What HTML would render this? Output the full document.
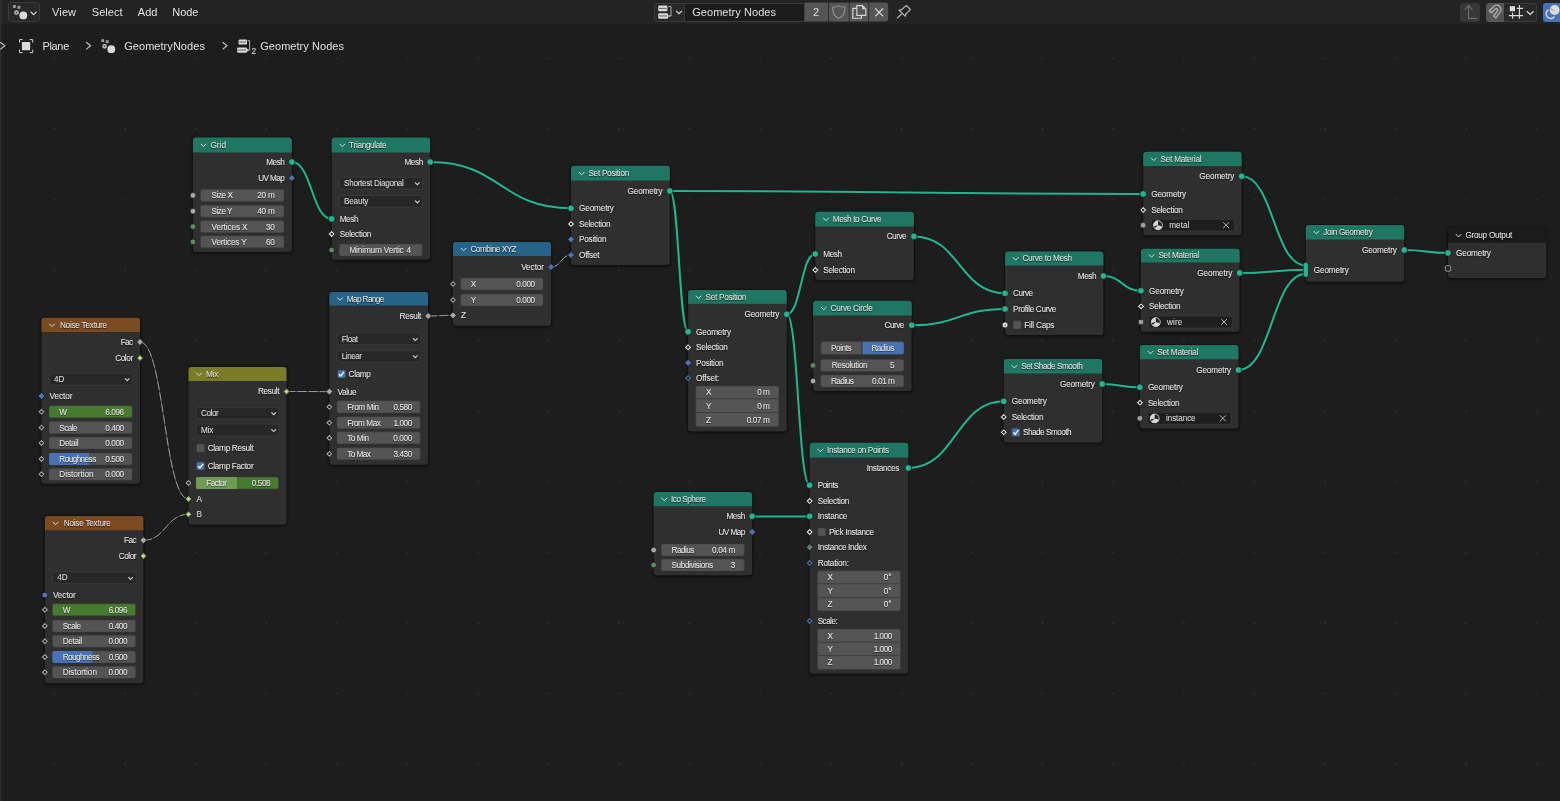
<!DOCTYPE html>
<html><head><meta charset="utf-8"><title>Geometry Nodes</title>
<style>
*{box-sizing:border-box;margin:0;padding:0}
html,body{width:1560px;height:801px;overflow:hidden;background:#1d1d1d}
body{position:relative;font-family:"Liberation Sans",sans-serif;font-size:8.2px;color:#e4e4e4}
svg.layer{position:absolute;left:0;top:0;width:1560px;height:801px;overflow:visible}
#tx,#hx{position:absolute;left:0;top:0;width:1560px;height:801px;will-change:transform}
#hdr{position:absolute;left:0;top:0;width:1560px;height:24px;background:#232323}
#lb{position:absolute;left:0;top:0;width:2px;height:801px;background:linear-gradient(90deg,#2e2e2e 0,#2c2c2c 1px,rgba(44,44,44,0) 2px)}
.t{position:absolute;height:12px;line-height:12px;white-space:nowrap;font-size:8.2px;-webkit-text-stroke:0.08px #e4e4e4;text-shadow:0 0.5px 0.8px rgba(0,0,0,.6)}
.t.hd{font-size:8.2px;color:#e2e2e2;-webkit-text-stroke:0.06px #e6e6e6;text-shadow:0 0.6px 1px rgba(0,0,0,.8)}
.t.fs{font-size:8.2px}
.t.dt{font-size:8.2px;color:#dcdcdc;-webkit-text-stroke:0.06px #dcdcdc;text-shadow:none}
.ht{position:absolute;font-size:11px;line-height:14px;color:#e2e2e2;white-space:nowrap;text-shadow:0 0.4px 0.6px rgba(0,0,0,.35)}
</style></head>
<body>
<svg class="layer" viewBox="0 0 1560 801"><g fill="#292929"><rect x="53.3" y="57.2" width="2.4" height="2.4" rx="1"/><rect x="123.9" y="57.2" width="2.4" height="2.4" rx="1"/><rect x="194.5" y="57.2" width="2.4" height="2.4" rx="1"/><rect x="265.0" y="57.2" width="2.4" height="2.4" rx="1"/><rect x="335.6" y="57.2" width="2.4" height="2.4" rx="1"/><rect x="406.2" y="57.2" width="2.4" height="2.4" rx="1"/><rect x="476.8" y="57.2" width="2.4" height="2.4" rx="1"/><rect x="547.4" y="57.2" width="2.4" height="2.4" rx="1"/><rect x="617.9" y="57.2" width="2.4" height="2.4" rx="1"/><rect x="688.5" y="57.2" width="2.4" height="2.4" rx="1"/><rect x="759.1" y="57.2" width="2.4" height="2.4" rx="1"/><rect x="829.7" y="57.2" width="2.4" height="2.4" rx="1"/><rect x="900.3" y="57.2" width="2.4" height="2.4" rx="1"/><rect x="970.8" y="57.2" width="2.4" height="2.4" rx="1"/><rect x="1041.4" y="57.2" width="2.4" height="2.4" rx="1"/><rect x="1112.0" y="57.2" width="2.4" height="2.4" rx="1"/><rect x="1182.6" y="57.2" width="2.4" height="2.4" rx="1"/><rect x="1253.2" y="57.2" width="2.4" height="2.4" rx="1"/><rect x="1323.7" y="57.2" width="2.4" height="2.4" rx="1"/><rect x="1394.3" y="57.2" width="2.4" height="2.4" rx="1"/><rect x="1464.9" y="57.2" width="2.4" height="2.4" rx="1"/><rect x="1535.5" y="57.2" width="2.4" height="2.4" rx="1"/><rect x="53.3" y="127.8" width="2.4" height="2.4" rx="1"/><rect x="123.9" y="127.8" width="2.4" height="2.4" rx="1"/><rect x="194.5" y="127.8" width="2.4" height="2.4" rx="1"/><rect x="265.0" y="127.8" width="2.4" height="2.4" rx="1"/><rect x="335.6" y="127.8" width="2.4" height="2.4" rx="1"/><rect x="406.2" y="127.8" width="2.4" height="2.4" rx="1"/><rect x="476.8" y="127.8" width="2.4" height="2.4" rx="1"/><rect x="547.4" y="127.8" width="2.4" height="2.4" rx="1"/><rect x="617.9" y="127.8" width="2.4" height="2.4" rx="1"/><rect x="688.5" y="127.8" width="2.4" height="2.4" rx="1"/><rect x="759.1" y="127.8" width="2.4" height="2.4" rx="1"/><rect x="829.7" y="127.8" width="2.4" height="2.4" rx="1"/><rect x="900.3" y="127.8" width="2.4" height="2.4" rx="1"/><rect x="970.8" y="127.8" width="2.4" height="2.4" rx="1"/><rect x="1041.4" y="127.8" width="2.4" height="2.4" rx="1"/><rect x="1112.0" y="127.8" width="2.4" height="2.4" rx="1"/><rect x="1182.6" y="127.8" width="2.4" height="2.4" rx="1"/><rect x="1253.2" y="127.8" width="2.4" height="2.4" rx="1"/><rect x="1323.7" y="127.8" width="2.4" height="2.4" rx="1"/><rect x="1394.3" y="127.8" width="2.4" height="2.4" rx="1"/><rect x="1464.9" y="127.8" width="2.4" height="2.4" rx="1"/><rect x="1535.5" y="127.8" width="2.4" height="2.4" rx="1"/><rect x="53.3" y="198.4" width="2.4" height="2.4" rx="1"/><rect x="123.9" y="198.4" width="2.4" height="2.4" rx="1"/><rect x="194.5" y="198.4" width="2.4" height="2.4" rx="1"/><rect x="265.0" y="198.4" width="2.4" height="2.4" rx="1"/><rect x="335.6" y="198.4" width="2.4" height="2.4" rx="1"/><rect x="406.2" y="198.4" width="2.4" height="2.4" rx="1"/><rect x="476.8" y="198.4" width="2.4" height="2.4" rx="1"/><rect x="547.4" y="198.4" width="2.4" height="2.4" rx="1"/><rect x="617.9" y="198.4" width="2.4" height="2.4" rx="1"/><rect x="688.5" y="198.4" width="2.4" height="2.4" rx="1"/><rect x="759.1" y="198.4" width="2.4" height="2.4" rx="1"/><rect x="829.7" y="198.4" width="2.4" height="2.4" rx="1"/><rect x="900.3" y="198.4" width="2.4" height="2.4" rx="1"/><rect x="970.8" y="198.4" width="2.4" height="2.4" rx="1"/><rect x="1041.4" y="198.4" width="2.4" height="2.4" rx="1"/><rect x="1112.0" y="198.4" width="2.4" height="2.4" rx="1"/><rect x="1182.6" y="198.4" width="2.4" height="2.4" rx="1"/><rect x="1253.2" y="198.4" width="2.4" height="2.4" rx="1"/><rect x="1323.7" y="198.4" width="2.4" height="2.4" rx="1"/><rect x="1394.3" y="198.4" width="2.4" height="2.4" rx="1"/><rect x="1464.9" y="198.4" width="2.4" height="2.4" rx="1"/><rect x="1535.5" y="198.4" width="2.4" height="2.4" rx="1"/><rect x="53.3" y="268.9" width="2.4" height="2.4" rx="1"/><rect x="123.9" y="268.9" width="2.4" height="2.4" rx="1"/><rect x="194.5" y="268.9" width="2.4" height="2.4" rx="1"/><rect x="265.0" y="268.9" width="2.4" height="2.4" rx="1"/><rect x="335.6" y="268.9" width="2.4" height="2.4" rx="1"/><rect x="406.2" y="268.9" width="2.4" height="2.4" rx="1"/><rect x="476.8" y="268.9" width="2.4" height="2.4" rx="1"/><rect x="547.4" y="268.9" width="2.4" height="2.4" rx="1"/><rect x="617.9" y="268.9" width="2.4" height="2.4" rx="1"/><rect x="688.5" y="268.9" width="2.4" height="2.4" rx="1"/><rect x="759.1" y="268.9" width="2.4" height="2.4" rx="1"/><rect x="829.7" y="268.9" width="2.4" height="2.4" rx="1"/><rect x="900.3" y="268.9" width="2.4" height="2.4" rx="1"/><rect x="970.8" y="268.9" width="2.4" height="2.4" rx="1"/><rect x="1041.4" y="268.9" width="2.4" height="2.4" rx="1"/><rect x="1112.0" y="268.9" width="2.4" height="2.4" rx="1"/><rect x="1182.6" y="268.9" width="2.4" height="2.4" rx="1"/><rect x="1253.2" y="268.9" width="2.4" height="2.4" rx="1"/><rect x="1323.7" y="268.9" width="2.4" height="2.4" rx="1"/><rect x="1394.3" y="268.9" width="2.4" height="2.4" rx="1"/><rect x="1464.9" y="268.9" width="2.4" height="2.4" rx="1"/><rect x="1535.5" y="268.9" width="2.4" height="2.4" rx="1"/><rect x="53.3" y="339.5" width="2.4" height="2.4" rx="1"/><rect x="123.9" y="339.5" width="2.4" height="2.4" rx="1"/><rect x="194.5" y="339.5" width="2.4" height="2.4" rx="1"/><rect x="265.0" y="339.5" width="2.4" height="2.4" rx="1"/><rect x="335.6" y="339.5" width="2.4" height="2.4" rx="1"/><rect x="406.2" y="339.5" width="2.4" height="2.4" rx="1"/><rect x="476.8" y="339.5" width="2.4" height="2.4" rx="1"/><rect x="547.4" y="339.5" width="2.4" height="2.4" rx="1"/><rect x="617.9" y="339.5" width="2.4" height="2.4" rx="1"/><rect x="688.5" y="339.5" width="2.4" height="2.4" rx="1"/><rect x="759.1" y="339.5" width="2.4" height="2.4" rx="1"/><rect x="829.7" y="339.5" width="2.4" height="2.4" rx="1"/><rect x="900.3" y="339.5" width="2.4" height="2.4" rx="1"/><rect x="970.8" y="339.5" width="2.4" height="2.4" rx="1"/><rect x="1041.4" y="339.5" width="2.4" height="2.4" rx="1"/><rect x="1112.0" y="339.5" width="2.4" height="2.4" rx="1"/><rect x="1182.6" y="339.5" width="2.4" height="2.4" rx="1"/><rect x="1253.2" y="339.5" width="2.4" height="2.4" rx="1"/><rect x="1323.7" y="339.5" width="2.4" height="2.4" rx="1"/><rect x="1394.3" y="339.5" width="2.4" height="2.4" rx="1"/><rect x="1464.9" y="339.5" width="2.4" height="2.4" rx="1"/><rect x="1535.5" y="339.5" width="2.4" height="2.4" rx="1"/><rect x="53.3" y="410.1" width="2.4" height="2.4" rx="1"/><rect x="123.9" y="410.1" width="2.4" height="2.4" rx="1"/><rect x="194.5" y="410.1" width="2.4" height="2.4" rx="1"/><rect x="265.0" y="410.1" width="2.4" height="2.4" rx="1"/><rect x="335.6" y="410.1" width="2.4" height="2.4" rx="1"/><rect x="406.2" y="410.1" width="2.4" height="2.4" rx="1"/><rect x="476.8" y="410.1" width="2.4" height="2.4" rx="1"/><rect x="547.4" y="410.1" width="2.4" height="2.4" rx="1"/><rect x="617.9" y="410.1" width="2.4" height="2.4" rx="1"/><rect x="688.5" y="410.1" width="2.4" height="2.4" rx="1"/><rect x="759.1" y="410.1" width="2.4" height="2.4" rx="1"/><rect x="829.7" y="410.1" width="2.4" height="2.4" rx="1"/><rect x="900.3" y="410.1" width="2.4" height="2.4" rx="1"/><rect x="970.8" y="410.1" width="2.4" height="2.4" rx="1"/><rect x="1041.4" y="410.1" width="2.4" height="2.4" rx="1"/><rect x="1112.0" y="410.1" width="2.4" height="2.4" rx="1"/><rect x="1182.6" y="410.1" width="2.4" height="2.4" rx="1"/><rect x="1253.2" y="410.1" width="2.4" height="2.4" rx="1"/><rect x="1323.7" y="410.1" width="2.4" height="2.4" rx="1"/><rect x="1394.3" y="410.1" width="2.4" height="2.4" rx="1"/><rect x="1464.9" y="410.1" width="2.4" height="2.4" rx="1"/><rect x="1535.5" y="410.1" width="2.4" height="2.4" rx="1"/><rect x="53.3" y="480.7" width="2.4" height="2.4" rx="1"/><rect x="123.9" y="480.7" width="2.4" height="2.4" rx="1"/><rect x="194.5" y="480.7" width="2.4" height="2.4" rx="1"/><rect x="265.0" y="480.7" width="2.4" height="2.4" rx="1"/><rect x="335.6" y="480.7" width="2.4" height="2.4" rx="1"/><rect x="406.2" y="480.7" width="2.4" height="2.4" rx="1"/><rect x="476.8" y="480.7" width="2.4" height="2.4" rx="1"/><rect x="547.4" y="480.7" width="2.4" height="2.4" rx="1"/><rect x="617.9" y="480.7" width="2.4" height="2.4" rx="1"/><rect x="688.5" y="480.7" width="2.4" height="2.4" rx="1"/><rect x="759.1" y="480.7" width="2.4" height="2.4" rx="1"/><rect x="829.7" y="480.7" width="2.4" height="2.4" rx="1"/><rect x="900.3" y="480.7" width="2.4" height="2.4" rx="1"/><rect x="970.8" y="480.7" width="2.4" height="2.4" rx="1"/><rect x="1041.4" y="480.7" width="2.4" height="2.4" rx="1"/><rect x="1112.0" y="480.7" width="2.4" height="2.4" rx="1"/><rect x="1182.6" y="480.7" width="2.4" height="2.4" rx="1"/><rect x="1253.2" y="480.7" width="2.4" height="2.4" rx="1"/><rect x="1323.7" y="480.7" width="2.4" height="2.4" rx="1"/><rect x="1394.3" y="480.7" width="2.4" height="2.4" rx="1"/><rect x="1464.9" y="480.7" width="2.4" height="2.4" rx="1"/><rect x="1535.5" y="480.7" width="2.4" height="2.4" rx="1"/><rect x="53.3" y="551.3" width="2.4" height="2.4" rx="1"/><rect x="123.9" y="551.3" width="2.4" height="2.4" rx="1"/><rect x="194.5" y="551.3" width="2.4" height="2.4" rx="1"/><rect x="265.0" y="551.3" width="2.4" height="2.4" rx="1"/><rect x="335.6" y="551.3" width="2.4" height="2.4" rx="1"/><rect x="406.2" y="551.3" width="2.4" height="2.4" rx="1"/><rect x="476.8" y="551.3" width="2.4" height="2.4" rx="1"/><rect x="547.4" y="551.3" width="2.4" height="2.4" rx="1"/><rect x="617.9" y="551.3" width="2.4" height="2.4" rx="1"/><rect x="688.5" y="551.3" width="2.4" height="2.4" rx="1"/><rect x="759.1" y="551.3" width="2.4" height="2.4" rx="1"/><rect x="829.7" y="551.3" width="2.4" height="2.4" rx="1"/><rect x="900.3" y="551.3" width="2.4" height="2.4" rx="1"/><rect x="970.8" y="551.3" width="2.4" height="2.4" rx="1"/><rect x="1041.4" y="551.3" width="2.4" height="2.4" rx="1"/><rect x="1112.0" y="551.3" width="2.4" height="2.4" rx="1"/><rect x="1182.6" y="551.3" width="2.4" height="2.4" rx="1"/><rect x="1253.2" y="551.3" width="2.4" height="2.4" rx="1"/><rect x="1323.7" y="551.3" width="2.4" height="2.4" rx="1"/><rect x="1394.3" y="551.3" width="2.4" height="2.4" rx="1"/><rect x="1464.9" y="551.3" width="2.4" height="2.4" rx="1"/><rect x="1535.5" y="551.3" width="2.4" height="2.4" rx="1"/><rect x="53.3" y="621.8" width="2.4" height="2.4" rx="1"/><rect x="123.9" y="621.8" width="2.4" height="2.4" rx="1"/><rect x="194.5" y="621.8" width="2.4" height="2.4" rx="1"/><rect x="265.0" y="621.8" width="2.4" height="2.4" rx="1"/><rect x="335.6" y="621.8" width="2.4" height="2.4" rx="1"/><rect x="406.2" y="621.8" width="2.4" height="2.4" rx="1"/><rect x="476.8" y="621.8" width="2.4" height="2.4" rx="1"/><rect x="547.4" y="621.8" width="2.4" height="2.4" rx="1"/><rect x="617.9" y="621.8" width="2.4" height="2.4" rx="1"/><rect x="688.5" y="621.8" width="2.4" height="2.4" rx="1"/><rect x="759.1" y="621.8" width="2.4" height="2.4" rx="1"/><rect x="829.7" y="621.8" width="2.4" height="2.4" rx="1"/><rect x="900.3" y="621.8" width="2.4" height="2.4" rx="1"/><rect x="970.8" y="621.8" width="2.4" height="2.4" rx="1"/><rect x="1041.4" y="621.8" width="2.4" height="2.4" rx="1"/><rect x="1112.0" y="621.8" width="2.4" height="2.4" rx="1"/><rect x="1182.6" y="621.8" width="2.4" height="2.4" rx="1"/><rect x="1253.2" y="621.8" width="2.4" height="2.4" rx="1"/><rect x="1323.7" y="621.8" width="2.4" height="2.4" rx="1"/><rect x="1394.3" y="621.8" width="2.4" height="2.4" rx="1"/><rect x="1464.9" y="621.8" width="2.4" height="2.4" rx="1"/><rect x="1535.5" y="621.8" width="2.4" height="2.4" rx="1"/><rect x="53.3" y="692.4" width="2.4" height="2.4" rx="1"/><rect x="123.9" y="692.4" width="2.4" height="2.4" rx="1"/><rect x="194.5" y="692.4" width="2.4" height="2.4" rx="1"/><rect x="265.0" y="692.4" width="2.4" height="2.4" rx="1"/><rect x="335.6" y="692.4" width="2.4" height="2.4" rx="1"/><rect x="406.2" y="692.4" width="2.4" height="2.4" rx="1"/><rect x="476.8" y="692.4" width="2.4" height="2.4" rx="1"/><rect x="547.4" y="692.4" width="2.4" height="2.4" rx="1"/><rect x="617.9" y="692.4" width="2.4" height="2.4" rx="1"/><rect x="688.5" y="692.4" width="2.4" height="2.4" rx="1"/><rect x="759.1" y="692.4" width="2.4" height="2.4" rx="1"/><rect x="829.7" y="692.4" width="2.4" height="2.4" rx="1"/><rect x="900.3" y="692.4" width="2.4" height="2.4" rx="1"/><rect x="970.8" y="692.4" width="2.4" height="2.4" rx="1"/><rect x="1041.4" y="692.4" width="2.4" height="2.4" rx="1"/><rect x="1112.0" y="692.4" width="2.4" height="2.4" rx="1"/><rect x="1182.6" y="692.4" width="2.4" height="2.4" rx="1"/><rect x="1253.2" y="692.4" width="2.4" height="2.4" rx="1"/><rect x="1323.7" y="692.4" width="2.4" height="2.4" rx="1"/><rect x="1394.3" y="692.4" width="2.4" height="2.4" rx="1"/><rect x="1464.9" y="692.4" width="2.4" height="2.4" rx="1"/><rect x="1535.5" y="692.4" width="2.4" height="2.4" rx="1"/><rect x="53.3" y="763.0" width="2.4" height="2.4" rx="1"/><rect x="123.9" y="763.0" width="2.4" height="2.4" rx="1"/><rect x="194.5" y="763.0" width="2.4" height="2.4" rx="1"/><rect x="265.0" y="763.0" width="2.4" height="2.4" rx="1"/><rect x="335.6" y="763.0" width="2.4" height="2.4" rx="1"/><rect x="406.2" y="763.0" width="2.4" height="2.4" rx="1"/><rect x="476.8" y="763.0" width="2.4" height="2.4" rx="1"/><rect x="547.4" y="763.0" width="2.4" height="2.4" rx="1"/><rect x="617.9" y="763.0" width="2.4" height="2.4" rx="1"/><rect x="688.5" y="763.0" width="2.4" height="2.4" rx="1"/><rect x="759.1" y="763.0" width="2.4" height="2.4" rx="1"/><rect x="829.7" y="763.0" width="2.4" height="2.4" rx="1"/><rect x="900.3" y="763.0" width="2.4" height="2.4" rx="1"/><rect x="970.8" y="763.0" width="2.4" height="2.4" rx="1"/><rect x="1041.4" y="763.0" width="2.4" height="2.4" rx="1"/><rect x="1112.0" y="763.0" width="2.4" height="2.4" rx="1"/><rect x="1182.6" y="763.0" width="2.4" height="2.4" rx="1"/><rect x="1253.2" y="763.0" width="2.4" height="2.4" rx="1"/><rect x="1323.7" y="763.0" width="2.4" height="2.4" rx="1"/><rect x="1394.3" y="763.0" width="2.4" height="2.4" rx="1"/><rect x="1464.9" y="763.0" width="2.4" height="2.4" rx="1"/><rect x="1535.5" y="763.0" width="2.4" height="2.4" rx="1"/></g></svg>
<svg class="layer" viewBox="0 0 1560 801"><defs><filter id="sh" x="-20%" y="-20%" width="140%" height="140%"><feGaussianBlur stdDeviation="1.6"/></filter></defs><path d="M291.8 162.0C311.8 162.0 311.8 218.9 331.7 218.9" stroke="#08211b" stroke-width="3.5" fill="none" opacity="0.85"/><path d="M291.8 162.0C311.8 162.0 311.8 218.9 331.7 218.9" stroke="#2ab18d" stroke-width="2.05" fill="none"/><path d="M430.1 162.0C500.6 162.0 500.6 208.3 571.0 208.3" stroke="#08211b" stroke-width="3.5" fill="none" opacity="0.85"/><path d="M430.1 162.0C500.6 162.0 500.6 208.3 571.0 208.3" stroke="#2ab18d" stroke-width="2.05" fill="none"/><path d="M669.8 191.0C906.5 191.0 906.5 194.0 1143.2 194.0" stroke="#08211b" stroke-width="3.5" fill="none" opacity="0.85"/><path d="M669.8 191.0C906.5 191.0 906.5 194.0 1143.2 194.0" stroke="#2ab18d" stroke-width="2.05" fill="none"/><path d="M669.8 191.0C679.0 191.0 679.0 331.7 688.1 331.7" stroke="#08211b" stroke-width="3.5" fill="none" opacity="0.85"/><path d="M669.8 191.0C679.0 191.0 679.0 331.7 688.1 331.7" stroke="#2ab18d" stroke-width="2.05" fill="none"/><path d="M786.7 314.2C801.0 314.2 801.0 254.0 815.3 254.0" stroke="#08211b" stroke-width="3.5" fill="none" opacity="0.85"/><path d="M786.7 314.2C801.0 314.2 801.0 254.0 815.3 254.0" stroke="#2ab18d" stroke-width="2.05" fill="none"/><path d="M786.7 314.2C798.2 314.2 798.2 485.2 809.7 485.2" stroke="#08211b" stroke-width="3.5" fill="none" opacity="0.85"/><path d="M786.7 314.2C798.2 314.2 798.2 485.2 809.7 485.2" stroke="#2ab18d" stroke-width="2.05" fill="none"/><path d="M913.9 236.4C959.5 236.4 959.5 293.3 1005.1 293.3" stroke="#08211b" stroke-width="3.5" fill="none" opacity="0.85"/><path d="M913.9 236.4C959.5 236.4 959.5 293.3 1005.1 293.3" stroke="#2ab18d" stroke-width="2.05" fill="none"/><path d="M911.7 325.2C958.4 325.2 958.4 309.0 1005.1 309.0" stroke="#08211b" stroke-width="3.5" fill="none" opacity="0.85"/><path d="M911.7 325.2C958.4 325.2 958.4 309.0 1005.1 309.0" stroke="#2ab18d" stroke-width="2.05" fill="none"/><path d="M1103.4 276.0C1122.2 276.0 1122.2 290.8 1141.0 290.8" stroke="#08211b" stroke-width="3.5" fill="none" opacity="0.85"/><path d="M1103.4 276.0C1122.2 276.0 1122.2 290.8 1141.0 290.8" stroke="#2ab18d" stroke-width="2.05" fill="none"/><path d="M752.1 516.4C780.9 516.4 780.9 516.4 809.7 516.4" stroke="#08211b" stroke-width="3.5" fill="none" opacity="0.85"/><path d="M752.1 516.4C780.9 516.4 780.9 516.4 809.7 516.4" stroke="#2ab18d" stroke-width="2.05" fill="none"/><path d="M908.3 468.0C956.0 468.0 956.0 401.3 1003.8 401.3" stroke="#08211b" stroke-width="3.5" fill="none" opacity="0.85"/><path d="M908.3 468.0C956.0 468.0 956.0 401.3 1003.8 401.3" stroke="#2ab18d" stroke-width="2.05" fill="none"/><path d="M1102.2 384.0C1121.1 384.0 1121.1 387.3 1139.9 387.3" stroke="#08211b" stroke-width="3.5" fill="none" opacity="0.85"/><path d="M1102.2 384.0C1121.1 384.0 1121.1 387.3 1139.9 387.3" stroke="#2ab18d" stroke-width="2.05" fill="none"/><path d="M1241.6 176.3C1273.7 176.3 1273.7 265.4 1305.8 265.4" stroke="#08211b" stroke-width="3.5" fill="none" opacity="0.85"/><path d="M1241.6 176.3C1273.7 176.3 1273.7 265.4 1305.8 265.4" stroke="#2ab18d" stroke-width="2.05" fill="none"/><path d="M1239.6 273.0C1272.7 273.0 1272.7 269.8 1305.8 269.8" stroke="#08211b" stroke-width="3.5" fill="none" opacity="0.85"/><path d="M1239.6 273.0C1272.7 273.0 1272.7 269.8 1305.8 269.8" stroke="#2ab18d" stroke-width="2.05" fill="none"/><path d="M1238.4 370.0C1272.1 370.0 1272.1 273.8 1305.8 273.8" stroke="#08211b" stroke-width="3.5" fill="none" opacity="0.85"/><path d="M1238.4 370.0C1272.1 370.0 1272.1 273.8 1305.8 273.8" stroke="#2ab18d" stroke-width="2.05" fill="none"/><path d="M1404.2 250.0C1426.1 250.0 1426.1 253.0 1448.0 253.0" stroke="#08211b" stroke-width="3.5" fill="none" opacity="0.85"/><path d="M1404.2 250.0C1426.1 250.0 1426.1 253.0 1448.0 253.0" stroke="#2ab18d" stroke-width="2.05" fill="none"/><path d="M551.0 267.0C561.0 267.0 561.0 255.0 571.0 255.0" stroke="#141414" stroke-width="2.4" fill="none" opacity="0.45"/><path d="M551.0 267.0C561.0 267.0 561.0 255.0 571.0 255.0" stroke="#6a6e6c" stroke-width="0.9" fill="none" opacity="0.8"/><path d="M551.0 267.0C561.0 267.0 561.0 255.0 571.0 255.0" stroke="#b4bab8" stroke-width="0.85" fill="none" stroke-dasharray="8.5 2.8" opacity="0.85"/><path d="M428.1 316.0C440.6 316.0 440.6 315.3 453.0 315.3" stroke="#141414" stroke-width="2.4" fill="none" opacity="0.45"/><path d="M428.1 316.0C440.6 316.0 440.6 315.3 453.0 315.3" stroke="#6a6e6c" stroke-width="0.9" fill="none" opacity="0.8"/><path d="M428.1 316.0C440.6 316.0 440.6 315.3 453.0 315.3" stroke="#b4bab8" stroke-width="0.85" fill="none" stroke-dasharray="8.5 2.8" opacity="0.85"/><path d="M286.5 391.5C307.9 391.5 307.9 391.6 329.3 391.6" stroke="#141414" stroke-width="2.4" fill="none" opacity="0.45"/><path d="M286.5 391.5C307.9 391.5 307.9 391.6 329.3 391.6" stroke="#6a6e6c" stroke-width="0.9" fill="none" opacity="0.8"/><path d="M286.5 391.5C307.9 391.5 307.9 391.6 329.3 391.6" stroke="#b4bab8" stroke-width="0.85" fill="none" stroke-dasharray="8.5 2.8" opacity="0.85"/><path d="M140.0 342.0C164.2 342.0 164.2 499.0 188.5 499.0" stroke="#141414" stroke-width="2.4" fill="none" opacity="0.45"/><path d="M140.0 342.0C164.2 342.0 164.2 499.0 188.5 499.0" stroke="#6a6e6c" stroke-width="0.9" fill="none" opacity="0.8"/><path d="M140.0 342.0C164.2 342.0 164.2 499.0 188.5 499.0" stroke="#b4bab8" stroke-width="0.85" fill="none" stroke-dasharray="8.5 2.8" opacity="0.85"/><path d="M143.4 540.3C165.9 540.3 165.9 514.3 188.5 514.3" stroke="#141414" stroke-width="2.4" fill="none" opacity="0.45"/><path d="M143.4 540.3C165.9 540.3 165.9 514.3 188.5 514.3" stroke="#6a6e6c" stroke-width="0.9" fill="none" opacity="0.8"/><path d="M143.4 540.3C165.9 540.3 165.9 514.3 188.5 514.3" stroke="#b4bab8" stroke-width="0.85" fill="none" stroke-dasharray="8.5 2.8" opacity="0.85"/><rect x="192.50" y="138.00" width="99.80" height="115.70" rx="3.5" fill="#000" opacity="0.55" filter="url(#sh)"/><rect x="192.30" y="136.80" width="100.20" height="115.90" rx="3.6" fill="#121212"/><path d="M196.00 137.50H288.80Q291.80 137.50 291.80 140.50V249.00Q291.80 252.00 288.80 252.00H196.00Q193.00 252.00 193.00 249.00V140.50Q193.00 137.50 196.00 137.50Z" fill="#2f2f2f"/><path d="M196.00 137.50H288.80Q291.80 137.50 291.80 140.50V152.50Q291.80 152.50 291.80 152.50H193.00Q193.00 152.50 193.00 152.50V140.50Q193.00 137.50 196.00 137.50Z" fill="#1f7763"/><path d="M200.80 143.80L203.60 146.60L206.40 143.80" fill="none" stroke="#dddddd" stroke-width="1.0"/><path d="M202.50 189.35H282.00Q284.00 189.35 284.00 191.35V199.45Q284.00 201.45 282.00 201.45H202.50Q200.50 201.45 200.50 199.45V191.35Q200.50 189.35 202.50 189.35Z" fill="#545454" stroke="#3a3a3a" stroke-width="0.5"/><path d="M202.50 205.15H282.00Q284.00 205.15 284.00 207.15V215.25Q284.00 217.25 282.00 217.25H202.50Q200.50 217.25 200.50 215.25V207.15Q200.50 205.15 202.50 205.15Z" fill="#545454" stroke="#3a3a3a" stroke-width="0.5"/><path d="M202.50 220.55H282.00Q284.00 220.55 284.00 222.55V230.65Q284.00 232.65 282.00 232.65H202.50Q200.50 232.65 200.50 230.65V222.55Q200.50 220.55 202.50 220.55Z" fill="#545454" stroke="#3a3a3a" stroke-width="0.5"/><path d="M202.50 235.75H282.00Q284.00 235.75 284.00 237.75V245.85Q284.00 247.85 282.00 247.85H202.50Q200.50 247.85 200.50 245.85V237.75Q200.50 235.75 202.50 235.75Z" fill="#545454" stroke="#3a3a3a" stroke-width="0.5"/><rect x="331.20" y="138.00" width="99.40" height="123.40" rx="3.5" fill="#000" opacity="0.55" filter="url(#sh)"/><rect x="331.00" y="136.80" width="99.80" height="123.60" rx="3.6" fill="#121212"/><path d="M334.70 137.50H427.10Q430.10 137.50 430.10 140.50V256.70Q430.10 259.70 427.10 259.70H334.70Q331.70 259.70 331.70 256.70V140.50Q331.70 137.50 334.70 137.50Z" fill="#2f2f2f"/><path d="M334.70 137.50H427.10Q430.10 137.50 430.10 140.50V152.50Q430.10 152.50 430.10 152.50H331.70Q331.70 152.50 331.70 152.50V140.50Q331.70 137.50 334.70 137.50Z" fill="#1f7763"/><path d="M339.50 143.80L342.30 146.60L345.10 143.80" fill="none" stroke="#dddddd" stroke-width="1.0"/><path d="M341.30 177.20H420.70Q422.70 177.20 422.70 179.20V187.00Q422.70 189.00 420.70 189.00H341.30Q339.30 189.00 339.30 187.00V179.20Q339.30 177.20 341.30 177.20Z" fill="#272727" stroke="#404040" stroke-width="0.7"/><path d="M415.00 182.35L417.30 184.65L419.60 182.35" fill="none" stroke="#d0d0d0" stroke-width="1.1"/><path d="M341.30 195.50H420.70Q422.70 195.50 422.70 197.50V205.30Q422.70 207.30 420.70 207.30H341.30Q339.30 207.30 339.30 205.30V197.50Q339.30 195.50 341.30 195.50Z" fill="#272727" stroke="#404040" stroke-width="0.7"/><path d="M415.00 200.65L417.30 202.95L419.60 200.65" fill="none" stroke="#d0d0d0" stroke-width="1.1"/><path d="M341.20 243.95H420.30Q422.30 243.95 422.30 245.95V254.05Q422.30 256.05 420.30 256.05H341.20Q339.20 256.05 339.20 254.05V245.95Q339.20 243.95 341.20 243.95Z" fill="#545454" stroke="#3a3a3a" stroke-width="0.5"/><rect x="570.50" y="166.30" width="99.80" height="100.40" rx="3.5" fill="#000" opacity="0.55" filter="url(#sh)"/><rect x="570.30" y="165.10" width="100.20" height="100.60" rx="3.6" fill="#121212"/><path d="M574.00 165.80H666.80Q669.80 165.80 669.80 168.80V262.00Q669.80 265.00 666.80 265.00H574.00Q571.00 265.00 571.00 262.00V168.80Q571.00 165.80 574.00 165.80Z" fill="#2f2f2f"/><path d="M574.00 165.80H666.80Q669.80 165.80 669.80 168.80V180.60Q669.80 180.60 669.80 180.60H571.00Q571.00 180.60 571.00 180.60V168.80Q571.00 165.80 574.00 165.80Z" fill="#1f7763"/><path d="M578.80 172.00L581.60 174.80L584.40 172.00" fill="none" stroke="#dddddd" stroke-width="1.0"/><rect x="452.50" y="242.60" width="99.00" height="84.90" rx="3.5" fill="#000" opacity="0.55" filter="url(#sh)"/><rect x="452.30" y="241.40" width="99.40" height="85.10" rx="3.6" fill="#121212"/><path d="M456.00 242.10H548.00Q551.00 242.10 551.00 245.10V322.80Q551.00 325.80 548.00 325.80H456.00Q453.00 325.80 453.00 322.80V245.10Q453.00 242.10 456.00 242.10Z" fill="#2f2f2f"/><path d="M456.00 242.10H548.00Q551.00 242.10 551.00 245.10V256.10Q551.00 256.10 551.00 256.10H453.00Q453.00 256.10 453.00 256.10V245.10Q453.00 242.10 456.00 242.10Z" fill="#256487"/><path d="M460.80 247.90L463.60 250.70L466.40 247.90" fill="none" stroke="#dddddd" stroke-width="1.0"/><path d="M462.50 277.95H541.20Q543.20 277.95 543.20 279.95V288.05Q543.20 290.05 541.20 290.05H462.50Q460.50 290.05 460.50 288.05V279.95Q460.50 277.95 462.50 277.95Z" fill="#545454" stroke="#3a3a3a" stroke-width="0.5"/><path d="M462.50 293.95H541.20Q543.20 293.95 543.20 295.95V304.05Q543.20 306.05 541.20 306.05H462.50Q460.50 306.05 460.50 304.05V295.95Q460.50 293.95 462.50 293.95Z" fill="#545454" stroke="#3a3a3a" stroke-width="0.5"/><rect x="328.90" y="292.50" width="99.70" height="174.00" rx="3.5" fill="#000" opacity="0.55" filter="url(#sh)"/><rect x="328.70" y="291.30" width="100.10" height="174.20" rx="3.6" fill="#121212"/><path d="M332.40 292.00H425.10Q428.10 292.00 428.10 295.00V461.80Q428.10 464.80 425.10 464.80H332.40Q329.40 464.80 329.40 461.80V295.00Q329.40 292.00 332.40 292.00Z" fill="#2f2f2f"/><path d="M332.40 292.00H425.10Q428.10 292.00 428.10 295.00V305.40Q428.10 305.40 428.10 305.40H329.40Q329.40 305.40 329.40 305.40V295.00Q329.40 292.00 332.40 292.00Z" fill="#256487"/><path d="M337.20 297.50L340.00 300.30L342.80 297.50" fill="none" stroke="#dddddd" stroke-width="1.0"/><path d="M339.00 333.10H418.70Q420.70 333.10 420.70 335.10V342.90Q420.70 344.90 418.70 344.90H339.00Q337.00 344.90 337.00 342.90V335.10Q337.00 333.10 339.00 333.10Z" fill="#272727" stroke="#404040" stroke-width="0.7"/><path d="M413.00 338.25L415.30 340.55L417.60 338.25" fill="none" stroke="#d0d0d0" stroke-width="1.1"/><path d="M339.00 350.30H418.70Q420.70 350.30 420.70 352.30V360.10Q420.70 362.10 418.70 362.10H339.00Q337.00 362.10 337.00 360.10V352.30Q337.00 350.30 339.00 350.30Z" fill="#272727" stroke="#404040" stroke-width="0.7"/><path d="M413.00 355.45L415.30 357.75L417.60 355.45" fill="none" stroke="#d0d0d0" stroke-width="1.1"/><rect x="337.40" y="369.90" width="8.20" height="8.20" rx="1.6" fill="#4772b3" stroke="#3a3a3a" stroke-width="0.5"/><path d="M339.00 374.20L340.80 376.00L344.00 371.80" fill="none" stroke="#fff" stroke-width="1.3"/><path d="M338.90 400.85H418.30Q420.30 400.85 420.30 402.85V410.95Q420.30 412.95 418.30 412.95H338.90Q336.90 412.95 336.90 410.95V402.85Q336.90 400.85 338.90 400.85Z" fill="#545454" stroke="#3a3a3a" stroke-width="0.5"/><path d="M338.90 416.65H418.30Q420.30 416.65 420.30 418.65V426.75Q420.30 428.75 418.30 428.75H338.90Q336.90 428.75 336.90 426.75V418.65Q336.90 416.65 338.90 416.65Z" fill="#545454" stroke="#3a3a3a" stroke-width="0.5"/><path d="M338.90 431.85H418.30Q420.30 431.85 420.30 433.85V441.95Q420.30 443.95 418.30 443.95H338.90Q336.90 443.95 336.90 441.95V433.85Q336.90 431.85 338.90 431.85Z" fill="#545454" stroke="#3a3a3a" stroke-width="0.5"/><path d="M338.90 447.75H418.30Q420.30 447.75 420.30 449.75V457.85Q420.30 459.85 418.30 459.85H338.90Q336.90 459.85 336.90 457.85V449.75Q336.90 447.75 338.90 447.75Z" fill="#545454" stroke="#3a3a3a" stroke-width="0.5"/><rect x="41.00" y="318.30" width="99.50" height="167.20" rx="3.5" fill="#000" opacity="0.55" filter="url(#sh)"/><rect x="40.80" y="317.10" width="99.90" height="167.40" rx="3.6" fill="#121212"/><path d="M44.50 317.80H137.00Q140.00 317.80 140.00 320.80V480.80Q140.00 483.80 137.00 483.80H44.50Q41.50 483.80 41.50 480.80V320.80Q41.50 317.80 44.50 317.80Z" fill="#2f2f2f"/><path d="M44.50 317.80H137.00Q140.00 317.80 140.00 320.80V332.10Q140.00 332.10 140.00 332.10H41.50Q41.50 332.10 41.50 332.10V320.80Q41.50 317.80 44.50 317.80Z" fill="#7a4a20"/><path d="M49.30 323.75L52.10 326.55L54.90 323.75" fill="none" stroke="#dddddd" stroke-width="1.0"/><path d="M51.10 373.30H130.60Q132.60 373.30 132.60 375.30V383.10Q132.60 385.10 130.60 385.10H51.10Q49.10 385.10 49.10 383.10V375.30Q49.10 373.30 51.10 373.30Z" fill="#272727" stroke="#404040" stroke-width="0.7"/><path d="M124.90 378.45L127.20 380.75L129.50 378.45" fill="none" stroke="#d0d0d0" stroke-width="1.1"/><path d="M51.00 405.65H130.20Q132.20 405.65 132.20 407.65V415.75Q132.20 417.75 130.20 417.75H51.00Q49.00 417.75 49.00 415.75V407.65Q49.00 405.65 51.00 405.65Z" fill="#467a2e" stroke="#3a3a3a" stroke-width="0.5"/><path d="M51.00 421.55H130.20Q132.20 421.55 132.20 423.55V431.65Q132.20 433.65 130.20 433.65H51.00Q49.00 433.65 49.00 431.65V423.55Q49.00 421.55 51.00 421.55Z" fill="#545454" stroke="#3a3a3a" stroke-width="0.5"/><path d="M51.00 436.95H130.20Q132.20 436.95 132.20 438.95V447.05Q132.20 449.05 130.20 449.05H51.00Q49.00 449.05 49.00 447.05V438.95Q49.00 436.95 51.00 436.95Z" fill="#545454" stroke="#3a3a3a" stroke-width="0.5"/><path d="M51.00 452.95H130.20Q132.20 452.95 132.20 454.95V463.05Q132.20 465.05 130.20 465.05H51.00Q49.00 465.05 49.00 463.05V454.95Q49.00 452.95 51.00 452.95Z" fill="#545454" stroke="#3a3a3a" stroke-width="0.5"/><path d="M51.00 452.95H88.94Q88.94 452.95 88.94 452.95V465.05Q88.94 465.05 88.94 465.05H51.00Q49.00 465.05 49.00 463.05V454.95Q49.00 452.95 51.00 452.95Z" fill="#4772b3"/><path d="M51.00 468.15H130.20Q132.20 468.15 132.20 470.15V478.25Q132.20 480.25 130.20 480.25H51.00Q49.00 480.25 49.00 478.25V470.15Q49.00 468.15 51.00 468.15Z" fill="#545454" stroke="#3a3a3a" stroke-width="0.5"/><rect x="44.40" y="516.50" width="99.50" height="168.40" rx="3.5" fill="#000" opacity="0.55" filter="url(#sh)"/><rect x="44.20" y="515.30" width="99.90" height="168.60" rx="3.6" fill="#121212"/><path d="M47.90 516.00H140.40Q143.40 516.00 143.40 519.00V680.20Q143.40 683.20 140.40 683.20H47.90Q44.90 683.20 44.90 680.20V519.00Q44.90 516.00 47.90 516.00Z" fill="#2f2f2f"/><path d="M47.90 516.00H140.40Q143.40 516.00 143.40 519.00V530.20Q143.40 530.20 143.40 530.20H44.90Q44.90 530.20 44.90 530.20V519.00Q44.90 516.00 47.90 516.00Z" fill="#7a4a20"/><path d="M52.70 521.90L55.50 524.70L58.30 521.90" fill="none" stroke="#dddddd" stroke-width="1.0"/><path d="M54.50 571.90H134.00Q136.00 571.90 136.00 573.90V581.70Q136.00 583.70 134.00 583.70H54.50Q52.50 583.70 52.50 581.70V573.90Q52.50 571.90 54.50 571.90Z" fill="#272727" stroke="#404040" stroke-width="0.7"/><path d="M128.30 577.05L130.60 579.35L132.90 577.05" fill="none" stroke="#d0d0d0" stroke-width="1.1"/><path d="M54.40 603.75H133.60Q135.60 603.75 135.60 605.75V613.85Q135.60 615.85 133.60 615.85H54.40Q52.40 615.85 52.40 613.85V605.75Q52.40 603.75 54.40 603.75Z" fill="#467a2e" stroke="#3a3a3a" stroke-width="0.5"/><path d="M54.40 619.95H133.60Q135.60 619.95 135.60 621.95V630.05Q135.60 632.05 133.60 632.05H54.40Q52.40 632.05 52.40 630.05V621.95Q52.40 619.95 54.40 619.95Z" fill="#545454" stroke="#3a3a3a" stroke-width="0.5"/><path d="M54.40 635.15H133.60Q135.60 635.15 135.60 637.15V645.25Q135.60 647.25 133.60 647.25H54.40Q52.40 647.25 52.40 645.25V637.15Q52.40 635.15 54.40 635.15Z" fill="#545454" stroke="#3a3a3a" stroke-width="0.5"/><path d="M54.40 650.95H133.60Q135.60 650.95 135.60 652.95V661.05Q135.60 663.05 133.60 663.05H54.40Q52.40 663.05 52.40 661.05V652.95Q52.40 650.95 54.40 650.95Z" fill="#545454" stroke="#3a3a3a" stroke-width="0.5"/><path d="M54.40 650.95H92.34Q92.34 650.95 92.34 650.95V663.05Q92.34 663.05 92.34 663.05H54.40Q52.40 663.05 52.40 661.05V652.95Q52.40 650.95 54.40 650.95Z" fill="#4772b3"/><path d="M54.40 666.15H133.60Q135.60 666.15 135.60 668.15V676.25Q135.60 678.25 133.60 678.25H54.40Q52.40 678.25 52.40 676.25V668.15Q52.40 666.15 54.40 666.15Z" fill="#545454" stroke="#3a3a3a" stroke-width="0.5"/><rect x="188.00" y="367.50" width="99.00" height="158.60" rx="3.5" fill="#000" opacity="0.55" filter="url(#sh)"/><rect x="187.80" y="366.30" width="99.40" height="158.80" rx="3.6" fill="#121212"/><path d="M191.50 367.00H283.50Q286.50 367.00 286.50 370.00V521.40Q286.50 524.40 283.50 524.40H191.50Q188.50 524.40 188.50 521.40V370.00Q188.50 367.00 191.50 367.00Z" fill="#2f2f2f"/><path d="M191.50 367.00H283.50Q286.50 367.00 286.50 370.00V380.90Q286.50 380.90 286.50 380.90H188.50Q188.50 380.90 188.50 380.90V370.00Q188.50 367.00 191.50 367.00Z" fill="#7a7b26"/><path d="M196.30 372.75L199.10 375.55L201.90 372.75" fill="none" stroke="#dddddd" stroke-width="1.0"/><path d="M198.10 407.30H277.10Q279.10 407.30 279.10 409.30V417.10Q279.10 419.10 277.10 419.10H198.10Q196.10 419.10 196.10 417.10V409.30Q196.10 407.30 198.10 407.30Z" fill="#272727" stroke="#404040" stroke-width="0.7"/><path d="M271.40 412.45L273.70 414.75L276.00 412.45" fill="none" stroke="#d0d0d0" stroke-width="1.1"/><path d="M198.10 424.10H277.10Q279.10 424.10 279.10 426.10V433.90Q279.10 435.90 277.10 435.90H198.10Q196.10 435.90 196.10 433.90V426.10Q196.10 424.10 198.10 424.10Z" fill="#272727" stroke="#404040" stroke-width="0.7"/><path d="M271.40 429.25L273.70 431.55L276.00 429.25" fill="none" stroke="#d0d0d0" stroke-width="1.1"/><rect x="196.50" y="443.90" width="8.20" height="8.20" rx="1.6" fill="#545454" stroke="#3a3a3a" stroke-width="0.5"/><rect x="196.50" y="461.90" width="8.20" height="8.20" rx="1.6" fill="#4772b3" stroke="#3a3a3a" stroke-width="0.5"/><path d="M198.10 466.20L199.90 468.00L203.10 463.80" fill="none" stroke="#fff" stroke-width="1.3"/><path d="M198.00 476.95H276.70Q278.70 476.95 278.70 478.95V487.05Q278.70 489.05 276.70 489.05H198.00Q196.00 489.05 196.00 487.05V478.95Q196.00 476.95 198.00 476.95Z" fill="#467a2e" stroke="#3a3a3a" stroke-width="0.5"/><path d="M198.00 476.95H236.94Q236.94 476.95 236.94 476.95V489.05Q236.94 489.05 236.94 489.05H198.00Q196.00 489.05 196.00 487.05V478.95Q196.00 476.95 198.00 476.95Z" fill="#6d9b52"/><rect x="687.60" y="290.50" width="99.60" height="142.40" rx="3.5" fill="#000" opacity="0.55" filter="url(#sh)"/><rect x="687.40" y="289.30" width="100.00" height="142.60" rx="3.6" fill="#121212"/><path d="M691.10 290.00H783.70Q786.70 290.00 786.70 293.00V428.20Q786.70 431.20 783.70 431.20H691.10Q688.10 431.20 688.10 428.20V293.00Q688.10 290.00 691.10 290.00Z" fill="#2f2f2f"/><path d="M691.10 290.00H783.70Q786.70 290.00 786.70 293.00V303.70Q786.70 303.70 786.70 303.70H688.10Q688.10 303.70 688.10 303.70V293.00Q688.10 290.00 691.10 290.00Z" fill="#1f7763"/><path d="M695.90 295.65L698.70 298.45L701.50 295.65" fill="none" stroke="#dddddd" stroke-width="1.0"/><path d="M697.80 386.00H776.90Q778.90 386.00 778.90 388.00V424.70Q778.90 426.70 776.90 426.70H697.80Q695.80 426.70 695.80 424.70V388.00Q695.80 386.00 697.80 386.00Z" fill="#545454" stroke="#3a3a3a" stroke-width="0.5"/><rect x="695.80" y="398.35" width="83.10" height="0.9" fill="#3b3b3b"/><rect x="695.80" y="412.05" width="83.10" height="0.9" fill="#3b3b3b"/><rect x="814.80" y="212.20" width="99.60" height="69.50" rx="3.5" fill="#000" opacity="0.55" filter="url(#sh)"/><rect x="814.60" y="211.00" width="100.00" height="69.70" rx="3.6" fill="#121212"/><path d="M818.30 211.70H910.90Q913.90 211.70 913.90 214.70V277.00Q913.90 280.00 910.90 280.00H818.30Q815.30 280.00 815.30 277.00V214.70Q815.30 211.70 818.30 211.70Z" fill="#2f2f2f"/><path d="M818.30 211.70H910.90Q913.90 211.70 913.90 214.70V226.40Q913.90 226.40 913.90 226.40H815.30Q815.30 226.40 815.30 226.40V214.70Q815.30 211.70 818.30 211.70Z" fill="#1f7763"/><path d="M823.10 217.85L825.90 220.65L828.70 217.85" fill="none" stroke="#dddddd" stroke-width="1.0"/><rect x="812.60" y="301.30" width="99.60" height="91.30" rx="3.5" fill="#000" opacity="0.55" filter="url(#sh)"/><rect x="812.40" y="300.10" width="100.00" height="91.50" rx="3.6" fill="#121212"/><path d="M816.10 300.80H908.70Q911.70 300.80 911.70 303.80V387.90Q911.70 390.90 908.70 390.90H816.10Q813.10 390.90 813.10 387.90V303.80Q813.10 300.80 816.10 300.80Z" fill="#2f2f2f"/><path d="M816.10 300.80H908.70Q911.70 300.80 911.70 303.80V315.40Q911.70 315.40 911.70 315.40H813.10Q813.10 315.40 813.10 315.40V303.80Q813.10 300.80 816.10 300.80Z" fill="#1f7763"/><path d="M820.90 306.90L823.70 309.70L826.50 306.90" fill="none" stroke="#dddddd" stroke-width="1.0"/><path d="M822.80 341.60H861.80Q861.80 341.60 861.80 341.60V354.40Q861.80 354.40 861.80 354.40H822.80Q820.80 354.40 820.80 352.40V343.60Q820.80 341.60 822.80 341.60Z" fill="#545454" stroke="#3a3a3a" stroke-width="0.5"/><path d="M862.30 341.60H902.00Q904.00 341.60 904.00 343.60V352.40Q904.00 354.40 902.00 354.40H862.30Q862.30 354.40 862.30 354.40V341.60Q862.30 341.60 862.30 341.60Z" fill="#4772b3" stroke="#3a3a3a" stroke-width="0.5"/><path d="M822.60 359.35H901.90Q903.90 359.35 903.90 361.35V369.45Q903.90 371.45 901.90 371.45H822.60Q820.60 371.45 820.60 369.45V361.35Q820.60 359.35 822.60 359.35Z" fill="#545454" stroke="#3a3a3a" stroke-width="0.5"/><path d="M822.60 374.95H901.90Q903.90 374.95 903.90 376.95V385.05Q903.90 387.05 901.90 387.05H822.60Q820.60 387.05 820.60 385.05V376.95Q820.60 374.95 822.60 374.95Z" fill="#545454" stroke="#3a3a3a" stroke-width="0.5"/><rect x="1004.60" y="251.90" width="99.30" height="84.80" rx="3.5" fill="#000" opacity="0.55" filter="url(#sh)"/><rect x="1004.40" y="250.70" width="99.70" height="85.00" rx="3.6" fill="#121212"/><path d="M1008.10 251.40H1100.40Q1103.40 251.40 1103.40 254.40V332.00Q1103.40 335.00 1100.40 335.00H1008.10Q1005.10 335.00 1005.10 332.00V254.40Q1005.10 251.40 1008.10 251.40Z" fill="#2f2f2f"/><path d="M1008.10 251.40H1100.40Q1103.40 251.40 1103.40 254.40V265.50Q1103.40 265.50 1103.40 265.50H1005.10Q1005.10 265.50 1005.10 265.50V254.40Q1005.10 251.40 1008.10 251.40Z" fill="#1f7763"/><path d="M1012.90 257.25L1015.70 260.05L1018.50 257.25" fill="none" stroke="#dddddd" stroke-width="1.0"/><rect x="1013.10" y="320.80" width="8.20" height="8.20" rx="1.6" fill="#545454" stroke="#3a3a3a" stroke-width="0.5"/><rect x="1003.30" y="359.60" width="99.40" height="84.50" rx="3.5" fill="#000" opacity="0.55" filter="url(#sh)"/><rect x="1003.10" y="358.40" width="99.80" height="84.70" rx="3.6" fill="#121212"/><path d="M1006.80 359.10H1099.20Q1102.20 359.10 1102.20 362.10V439.40Q1102.20 442.40 1099.20 442.40H1006.80Q1003.80 442.40 1003.80 439.40V362.10Q1003.80 359.10 1006.80 359.10Z" fill="#2f2f2f"/><path d="M1006.80 359.10H1099.20Q1102.20 359.10 1102.20 362.10V373.60Q1102.20 373.60 1102.20 373.60H1003.80Q1003.80 373.60 1003.80 373.60V362.10Q1003.80 359.10 1006.80 359.10Z" fill="#1f7763"/><path d="M1011.60 365.15L1014.40 367.95L1017.20 365.15" fill="none" stroke="#dddddd" stroke-width="1.0"/><rect x="1011.80" y="428.20" width="8.20" height="8.20" rx="1.6" fill="#4772b3" stroke="#3a3a3a" stroke-width="0.5"/><path d="M1013.40 432.50L1015.20 434.30L1018.40 430.10" fill="none" stroke="#fff" stroke-width="1.3"/><rect x="1142.70" y="152.30" width="99.40" height="84.60" rx="3.5" fill="#000" opacity="0.55" filter="url(#sh)"/><rect x="1142.50" y="151.10" width="99.80" height="84.80" rx="3.6" fill="#121212"/><path d="M1146.20 151.80H1238.60Q1241.60 151.80 1241.60 154.80V232.20Q1241.60 235.20 1238.60 235.20H1146.20Q1143.20 235.20 1143.20 232.20V154.80Q1143.20 151.80 1146.20 151.80Z" fill="#2f2f2f"/><path d="M1146.20 151.80H1238.60Q1241.60 151.80 1241.60 154.80V166.10Q1241.60 166.10 1241.60 166.10H1143.20Q1143.20 166.10 1143.20 166.10V154.80Q1143.20 151.80 1146.20 151.80Z" fill="#1f7763"/><path d="M1151.00 157.75L1153.80 160.55L1156.60 157.75" fill="none" stroke="#dddddd" stroke-width="1.0"/><path d="M1153.00 219.25H1232.30Q1234.30 219.25 1234.30 221.25V229.15Q1234.30 231.15 1232.30 231.15H1153.00Q1151.00 231.15 1151.00 229.15V221.25Q1151.00 219.25 1153.00 219.25Z" fill="#1e1e1e" stroke="#3c3c3c" stroke-width="0.7"/><circle cx="1158.00" cy="225.30" r="4.7" fill="#d6d6d6"/><path d="M1158.00 225.30L1158.00 220.60A4.7 4.7 0 0 1 1162.47 226.75Z" fill="#242424"/><path d="M1158.00 225.30L1154.51 228.44A4.7 4.7 0 0 1 1153.40 226.28Z" fill="#242424"/><circle cx="1158.00" cy="225.30" r="4.4" fill="none" stroke="#d6d6d6" stroke-width="0.7"/><path d="M1223.20 222.30L1229.00 228.10M1229.00 222.30L1223.20 228.10" fill="none" stroke="#bebebe" stroke-width="0.95"/><rect x="1140.50" y="249.20" width="99.60" height="84.20" rx="3.5" fill="#000" opacity="0.55" filter="url(#sh)"/><rect x="1140.30" y="248.00" width="100.00" height="84.40" rx="3.6" fill="#121212"/><path d="M1144.00 248.70H1236.60Q1239.60 248.70 1239.60 251.70V328.70Q1239.60 331.70 1236.60 331.70H1144.00Q1141.00 331.70 1141.00 328.70V251.70Q1141.00 248.70 1144.00 248.70Z" fill="#2f2f2f"/><path d="M1144.00 248.70H1236.60Q1239.60 248.70 1239.60 251.70V262.40Q1239.60 262.40 1239.60 262.40H1141.00Q1141.00 262.40 1141.00 262.40V251.70Q1141.00 248.70 1144.00 248.70Z" fill="#1f7763"/><path d="M1148.80 254.35L1151.60 257.15L1154.40 254.35" fill="none" stroke="#dddddd" stroke-width="1.0"/><path d="M1150.80 316.05H1230.30Q1232.30 316.05 1232.30 318.05V325.95Q1232.30 327.95 1230.30 327.95H1150.80Q1148.80 327.95 1148.80 325.95V318.05Q1148.80 316.05 1150.80 316.05Z" fill="#1e1e1e" stroke="#3c3c3c" stroke-width="0.7"/><circle cx="1155.80" cy="322.10" r="4.7" fill="#d6d6d6"/><path d="M1155.80 322.10L1155.80 317.40A4.7 4.7 0 0 1 1160.27 323.55Z" fill="#242424"/><path d="M1155.80 322.10L1152.31 325.24A4.7 4.7 0 0 1 1151.20 323.08Z" fill="#242424"/><circle cx="1155.80" cy="322.10" r="4.4" fill="none" stroke="#d6d6d6" stroke-width="0.7"/><path d="M1221.20 319.10L1227.00 324.90M1227.00 319.10L1221.20 324.90" fill="none" stroke="#bebebe" stroke-width="0.95"/><rect x="1139.40" y="345.60" width="99.50" height="84.50" rx="3.5" fill="#000" opacity="0.55" filter="url(#sh)"/><rect x="1139.20" y="344.40" width="99.90" height="84.70" rx="3.6" fill="#121212"/><path d="M1142.90 345.10H1235.40Q1238.40 345.10 1238.40 348.10V425.40Q1238.40 428.40 1235.40 428.40H1142.90Q1139.90 428.40 1139.90 425.40V348.10Q1139.90 345.10 1142.90 345.10Z" fill="#2f2f2f"/><path d="M1142.90 345.10H1235.40Q1238.40 345.10 1238.40 348.10V359.20Q1238.40 359.20 1238.40 359.20H1139.90Q1139.90 359.20 1139.90 359.20V348.10Q1139.90 345.10 1142.90 345.10Z" fill="#1f7763"/><path d="M1147.70 350.95L1150.50 353.75L1153.30 350.95" fill="none" stroke="#dddddd" stroke-width="1.0"/><path d="M1149.70 412.35H1229.10Q1231.10 412.35 1231.10 414.35V422.25Q1231.10 424.25 1229.10 424.25H1149.70Q1147.70 424.25 1147.70 422.25V414.35Q1147.70 412.35 1149.70 412.35Z" fill="#1e1e1e" stroke="#3c3c3c" stroke-width="0.7"/><circle cx="1154.70" cy="418.40" r="4.7" fill="#d6d6d6"/><path d="M1154.70 418.40L1154.70 413.70A4.7 4.7 0 0 1 1159.17 419.85Z" fill="#242424"/><path d="M1154.70 418.40L1151.21 421.54A4.7 4.7 0 0 1 1150.10 419.38Z" fill="#242424"/><circle cx="1154.70" cy="418.40" r="4.4" fill="none" stroke="#d6d6d6" stroke-width="0.7"/><path d="M1220.00 415.40L1225.80 421.20M1225.80 415.40L1220.00 421.20" fill="none" stroke="#bebebe" stroke-width="0.95"/><rect x="1305.30" y="225.50" width="99.40" height="58.00" rx="3.5" fill="#000" opacity="0.55" filter="url(#sh)"/><rect x="1305.10" y="224.30" width="99.80" height="58.20" rx="3.6" fill="#121212"/><path d="M1308.80 225.00H1401.20Q1404.20 225.00 1404.20 228.00V278.80Q1404.20 281.80 1401.20 281.80H1308.80Q1305.80 281.80 1305.80 278.80V228.00Q1305.80 225.00 1308.80 225.00Z" fill="#2f2f2f"/><path d="M1308.80 225.00H1401.20Q1404.20 225.00 1404.20 228.00V239.40Q1404.20 239.40 1404.20 239.40H1305.80Q1305.80 239.40 1305.80 239.40V228.00Q1305.80 225.00 1308.80 225.00Z" fill="#1f7763"/><path d="M1313.60 231.00L1316.40 233.80L1319.20 231.00" fill="none" stroke="#dddddd" stroke-width="1.0"/><rect x="1447.50" y="228.20" width="99.30" height="51.50" rx="3.5" fill="#000" opacity="0.55" filter="url(#sh)"/><rect x="1447.30" y="227.00" width="99.70" height="51.70" rx="3.6" fill="#121212"/><path d="M1451.00 227.70H1543.30Q1546.30 227.70 1546.30 230.70V275.00Q1546.30 278.00 1543.30 278.00H1451.00Q1448.00 278.00 1448.00 275.00V230.70Q1448.00 227.70 1451.00 227.70Z" fill="#2f2f2f"/><path d="M1451.00 227.70H1543.30Q1546.30 227.70 1546.30 230.70V243.00Q1546.30 243.00 1546.30 243.00H1448.00Q1448.00 243.00 1448.00 243.00V230.70Q1448.00 227.70 1451.00 227.70Z" fill="#1b1b1b"/><path d="M1455.80 234.15L1458.60 236.95L1461.40 234.15" fill="none" stroke="#dddddd" stroke-width="1.0"/><rect x="809.20" y="443.30" width="99.60" height="231.80" rx="3.5" fill="#000" opacity="0.55" filter="url(#sh)"/><rect x="809.00" y="442.10" width="100.00" height="232.00" rx="3.6" fill="#121212"/><path d="M812.70 442.80H905.30Q908.30 442.80 908.30 445.80V670.40Q908.30 673.40 905.30 673.40H812.70Q809.70 673.40 809.70 670.40V445.80Q809.70 442.80 812.70 442.80Z" fill="#2f2f2f"/><path d="M812.70 442.80H905.30Q908.30 442.80 908.30 445.80V457.40Q908.30 457.40 908.30 457.40H809.70Q809.70 457.40 809.70 457.40V445.80Q809.70 442.80 812.70 442.80Z" fill="#1f7763"/><path d="M817.50 448.90L820.30 451.70L823.10 448.90" fill="none" stroke="#dddddd" stroke-width="1.0"/><rect x="817.70" y="527.90" width="8.20" height="8.20" rx="1.6" fill="#545454" stroke="#3a3a3a" stroke-width="0.5"/><path d="M819.40 570.80H898.50Q900.50 570.80 900.50 572.80V608.90Q900.50 610.90 898.50 610.90H819.40Q817.40 610.90 817.40 608.90V572.80Q817.40 570.80 819.40 570.80Z" fill="#545454" stroke="#3a3a3a" stroke-width="0.5"/><rect x="817.40" y="583.35" width="83.10" height="0.9" fill="#3b3b3b"/><rect x="817.40" y="596.95" width="83.10" height="0.9" fill="#3b3b3b"/><path d="M819.40 629.10H898.50Q900.50 629.10 900.50 631.10V667.40Q900.50 669.40 898.50 669.40H819.40Q817.40 669.40 817.40 667.40V631.10Q817.40 629.10 819.40 629.10Z" fill="#545454" stroke="#3a3a3a" stroke-width="0.5"/><rect x="817.40" y="641.65" width="83.10" height="0.9" fill="#3b3b3b"/><rect x="817.40" y="655.15" width="83.10" height="0.9" fill="#3b3b3b"/><rect x="653.20" y="492.50" width="99.40" height="84.40" rx="3.5" fill="#000" opacity="0.55" filter="url(#sh)"/><rect x="653.00" y="491.30" width="99.80" height="84.60" rx="3.6" fill="#121212"/><path d="M656.70 492.00H749.10Q752.10 492.00 752.10 495.00V572.20Q752.10 575.20 749.10 575.20H656.70Q653.70 575.20 653.70 572.20V495.00Q653.70 492.00 656.70 492.00Z" fill="#2f2f2f"/><path d="M656.70 492.00H749.10Q752.10 492.00 752.10 495.00V506.20Q752.10 506.20 752.10 506.20H653.70Q653.70 506.20 653.70 506.20V495.00Q653.70 492.00 656.70 492.00Z" fill="#1f7763"/><path d="M661.50 497.90L664.30 500.70L667.10 497.90" fill="none" stroke="#dddddd" stroke-width="1.0"/><path d="M663.20 543.95H742.30Q744.30 543.95 744.30 545.95V554.05Q744.30 556.05 742.30 556.05H663.20Q661.20 556.05 661.20 554.05V545.95Q661.20 543.95 663.20 543.95Z" fill="#545454" stroke="#3a3a3a" stroke-width="0.5"/><path d="M663.20 558.95H742.30Q744.30 558.95 744.30 560.95V569.05Q744.30 571.05 742.30 571.05H663.20Q661.20 571.05 661.20 569.05V560.95Q661.20 558.95 663.20 558.95Z" fill="#545454" stroke="#3a3a3a" stroke-width="0.5"/></svg>
<div id="tx"><div class="t hd" style="left:210.40px;top:139.80px;letter-spacing:0.036px;">Grid</div><div class="t" style="right:1275.52px;top:156.90px;letter-spacing:-0.417px;">Mesh</div><div class="t" style="right:1275.66px;top:172.90px;letter-spacing:-0.564px;">UV Map</div><div class="t fs" style="left:211.60px;top:190.30px;letter-spacing:-0.460px;">Size X</div><div class="t fs" style="right:1285.51px;top:190.30px;letter-spacing:-0.210px;">20 m</div><div class="t fs" style="left:211.60px;top:206.10px;letter-spacing:-0.530px;">Size Y</div><div class="t fs" style="right:1285.51px;top:206.10px;letter-spacing:-0.210px;">40 m</div><div class="t fs" style="left:211.60px;top:221.50px;letter-spacing:-0.102px;">Vertices X</div><div class="t fs" style="right:1285.62px;top:221.50px;letter-spacing:-0.321px;">30</div><div class="t fs" style="left:211.60px;top:236.70px;letter-spacing:-0.185px;">Vertices Y</div><div class="t fs" style="right:1285.72px;top:236.70px;letter-spacing:-0.421px;">60</div><div class="t hd" style="left:349.10px;top:139.80px;letter-spacing:-0.312px;">Triangulate</div><div class="t" style="right:1137.22px;top:156.90px;letter-spacing:-0.417px;">Mesh</div><div class="t dt" style="left:344.10px;top:177.70px;letter-spacing:-0.330px;">Shortest Diagonal</div><div class="t dt" style="left:344.10px;top:196.00px;letter-spacing:-0.246px;">Beauty</div><div class="t" style="left:339.70px;top:213.80px;letter-spacing:-0.417px;">Mesh</div><div class="t" style="left:339.70px;top:228.90px;letter-spacing:-0.254px;">Selection</div><div class="t fs" style="left:349.40px;top:244.90px;letter-spacing:-0.127px;">Minimum Vertic</div><div class="t fs" style="right:1149.00px;top:244.90px;">4</div><div class="t hd" style="left:588.40px;top:168.00px;letter-spacing:-0.260px;">Set Position</div><div class="t" style="right:897.64px;top:185.90px;letter-spacing:-0.143px;">Geometry</div><div class="t" style="left:579.00px;top:203.20px;letter-spacing:-0.143px;">Geometry</div><div class="t" style="left:579.00px;top:218.90px;letter-spacing:-0.254px;">Selection</div><div class="t" style="left:579.00px;top:234.20px;letter-spacing:-0.239px;">Position</div><div class="t" style="left:579.00px;top:249.90px;letter-spacing:-0.225px;">Offset</div><div class="t hd" style="left:470.40px;top:243.90px;letter-spacing:-0.474px;">Combine XYZ</div><div class="t" style="right:1015.95px;top:261.90px;letter-spacing:-0.050px;">Vector</div><div class="t fs" style="left:470.80px;top:278.90px;">X</div><div class="t fs" style="right:1025.28px;top:278.90px;letter-spacing:-0.380px;">0.000</div><div class="t fs" style="left:470.80px;top:294.90px;">Y</div><div class="t fs" style="right:1025.28px;top:294.90px;letter-spacing:-0.380px;">0.000</div><div class="t" style="left:461.00px;top:310.20px;">Z</div><div class="t hd" style="left:346.80px;top:293.50px;letter-spacing:-0.600px;">Map Range</div><div class="t" style="right:1139.11px;top:310.90px;letter-spacing:-0.309px;">Result</div><div class="t dt" style="left:341.80px;top:333.60px;letter-spacing:-0.483px;">Float</div><div class="t dt" style="left:341.80px;top:350.80px;letter-spacing:-0.499px;">Linear</div><div class="t" style="left:348.60px;top:368.90px;letter-spacing:-0.349px;">Clamp</div><div class="t" style="left:337.40px;top:386.50px;letter-spacing:-0.266px;">Value</div><div class="t fs" style="left:347.20px;top:401.80px;letter-spacing:-0.375px;">From Min</div><div class="t fs" style="right:1148.23px;top:401.80px;letter-spacing:-0.430px;">0.580</div><div class="t fs" style="left:347.20px;top:417.60px;letter-spacing:-0.457px;">From Max</div><div class="t fs" style="right:1148.23px;top:417.60px;letter-spacing:-0.430px;">1.000</div><div class="t fs" style="left:347.20px;top:432.80px;letter-spacing:-0.430px;">To Min</div><div class="t fs" style="right:1148.18px;top:432.80px;letter-spacing:-0.380px;">0.000</div><div class="t fs" style="left:347.20px;top:448.70px;letter-spacing:-0.546px;">To Max</div><div class="t fs" style="right:1148.23px;top:448.70px;letter-spacing:-0.430px;">3.430</div><div class="t hd" style="left:59.90px;top:319.75px;letter-spacing:-0.224px;">Noise Texture</div><div class="t" style="right:1427.50px;top:336.90px;letter-spacing:-0.600px;">Fac</div><div class="t" style="right:1427.32px;top:352.90px;letter-spacing:-0.424px;">Color</div><div class="t dt" style="left:53.90px;top:373.80px;">4D</div><div class="t" style="left:49.50px;top:390.90px;letter-spacing:-0.050px;">Vector</div><div class="t fs" style="left:59.30px;top:406.60px;">W</div><div class="t fs" style="right:1436.33px;top:406.60px;letter-spacing:-0.430px;">6.096</div><div class="t fs" style="left:59.30px;top:422.50px;letter-spacing:-0.553px;">Scale</div><div class="t fs" style="right:1436.33px;top:422.50px;letter-spacing:-0.430px;">0.400</div><div class="t fs" style="left:59.30px;top:437.90px;letter-spacing:-0.333px;">Detail</div><div class="t fs" style="right:1436.28px;top:437.90px;letter-spacing:-0.380px;">0.000</div><div class="t fs" style="left:59.30px;top:453.90px;letter-spacing:-0.561px;">Roughness</div><div class="t fs" style="right:1436.33px;top:453.90px;letter-spacing:-0.430px;">0.500</div><div class="t fs" style="left:59.30px;top:469.10px;letter-spacing:-0.037px;">Distortion</div><div class="t fs" style="right:1436.28px;top:469.10px;letter-spacing:-0.380px;">0.000</div><div class="t hd" style="left:63.70px;top:517.90px;letter-spacing:-0.224px;">Noise Texture</div><div class="t" style="right:1424.10px;top:535.20px;letter-spacing:-0.600px;">Fac</div><div class="t" style="right:1423.92px;top:550.90px;letter-spacing:-0.424px;">Color</div><div class="t dt" style="left:57.30px;top:572.40px;">4D</div><div class="t" style="left:52.90px;top:589.90px;letter-spacing:-0.050px;">Vector</div><div class="t fs" style="left:62.70px;top:604.70px;">W</div><div class="t fs" style="right:1432.93px;top:604.70px;letter-spacing:-0.430px;">6.096</div><div class="t fs" style="left:62.70px;top:620.90px;letter-spacing:-0.553px;">Scale</div><div class="t fs" style="right:1432.93px;top:620.90px;letter-spacing:-0.430px;">0.400</div><div class="t fs" style="left:62.70px;top:636.10px;letter-spacing:-0.333px;">Detail</div><div class="t fs" style="right:1432.88px;top:636.10px;letter-spacing:-0.380px;">0.000</div><div class="t fs" style="left:62.70px;top:651.90px;letter-spacing:-0.561px;">Roughness</div><div class="t fs" style="right:1432.93px;top:651.90px;letter-spacing:-0.430px;">0.500</div><div class="t fs" style="left:62.70px;top:667.10px;letter-spacing:-0.037px;">Distortion</div><div class="t fs" style="right:1432.88px;top:667.10px;letter-spacing:-0.380px;">0.000</div><div class="t hd" style="left:205.90px;top:368.75px;letter-spacing:-0.176px;">Mix</div><div class="t" style="right:1280.71px;top:386.40px;letter-spacing:-0.309px;">Result</div><div class="t dt" style="left:200.90px;top:407.80px;letter-spacing:-0.424px;">Color</div><div class="t dt" style="left:200.90px;top:424.60px;letter-spacing:-0.176px;">Mix</div><div class="t" style="left:207.70px;top:442.90px;letter-spacing:-0.292px;">Clamp Result</div><div class="t" style="left:207.70px;top:460.90px;letter-spacing:-0.292px;">Clamp Factor</div><div class="t fs" style="left:206.30px;top:477.90px;letter-spacing:-0.528px;">Factor</div><div class="t fs" style="right:1289.83px;top:477.90px;letter-spacing:-0.430px;">0.508</div><div class="t" style="left:196.50px;top:493.90px;">A</div><div class="t" style="left:196.50px;top:509.20px;">B</div><div class="t hd" style="left:705.50px;top:291.65px;letter-spacing:-0.260px;">Set Position</div><div class="t" style="right:780.74px;top:309.20px;letter-spacing:-0.143px;">Geometry</div><div class="t" style="left:696.10px;top:326.60px;letter-spacing:-0.143px;">Geometry</div><div class="t" style="left:696.10px;top:342.20px;letter-spacing:-0.254px;">Selection</div><div class="t" style="left:696.10px;top:357.70px;letter-spacing:-0.239px;">Position</div><div class="t" style="left:696.10px;top:372.90px;letter-spacing:-0.117px;">Offset:</div><div class="t fs" style="left:706.00px;top:387.30px;">X</div><div class="t fs" style="right:790.58px;top:387.30px;letter-spacing:-0.485px;">0 m</div><div class="t fs" style="left:706.00px;top:400.55px;">Y</div><div class="t fs" style="right:790.58px;top:400.55px;letter-spacing:-0.485px;">0 m</div><div class="t fs" style="left:706.00px;top:414.50px;">Z</div><div class="t fs" style="right:790.45px;top:414.50px;letter-spacing:-0.354px;">0.07 m</div><div class="t hd" style="left:832.70px;top:213.85px;letter-spacing:-0.360px;">Mesh to Curve</div><div class="t" style="right:653.87px;top:231.30px;letter-spacing:-0.469px;">Curve</div><div class="t" style="left:823.30px;top:248.90px;letter-spacing:-0.417px;">Mesh</div><div class="t" style="left:823.30px;top:264.90px;letter-spacing:-0.254px;">Selection</div><div class="t hd" style="left:830.50px;top:302.90px;letter-spacing:-0.255px;">Curve Circle</div><div class="t" style="right:656.07px;top:320.10px;letter-spacing:-0.469px;">Curve</div><div class="t fs" style="left:791.09px;width:100px;text-align:center;top:342.90px;letter-spacing:-0.418px;">Points</div><div class="t fs" style="left:832.65px;width:100px;text-align:center;top:342.90px;letter-spacing:-0.505px;">Radius</div><div class="t fs" style="left:831.70px;top:360.30px;letter-spacing:-0.305px;">Resolution</div><div class="t fs" style="right:665.40px;top:360.30px;">5</div><div class="t fs" style="left:830.90px;top:375.90px;letter-spacing:-0.505px;">Radius</div><div class="t fs" style="right:665.53px;top:375.90px;letter-spacing:-0.434px;">0.01 m</div><div class="t hd" style="left:1022.50px;top:253.25px;letter-spacing:-0.302px;">Curve to Mesh</div><div class="t" style="right:463.92px;top:270.90px;letter-spacing:-0.417px;">Mesh</div><div class="t" style="left:1013.10px;top:288.20px;letter-spacing:-0.469px;">Curve</div><div class="t" style="left:1013.10px;top:303.90px;letter-spacing:-0.341px;">Profile Curve</div><div class="t" style="left:1024.30px;top:319.80px;letter-spacing:-0.212px;">Fill Caps</div><div class="t hd" style="left:1021.20px;top:361.15px;letter-spacing:-0.476px;">Set Shade Smooth</div><div class="t" style="right:465.24px;top:378.90px;letter-spacing:-0.143px;">Geometry</div><div class="t" style="left:1011.80px;top:396.20px;letter-spacing:-0.143px;">Geometry</div><div class="t" style="left:1011.80px;top:411.90px;letter-spacing:-0.254px;">Selection</div><div class="t" style="left:1023.00px;top:427.20px;letter-spacing:-0.505px;">Shade Smooth</div><div class="t hd" style="left:1160.60px;top:153.75px;letter-spacing:-0.250px;">Set Material</div><div class="t" style="right:325.84px;top:171.20px;letter-spacing:-0.143px;">Geometry</div><div class="t" style="left:1151.20px;top:188.90px;letter-spacing:-0.143px;">Geometry</div><div class="t" style="left:1151.20px;top:204.90px;letter-spacing:-0.254px;">Selection</div><div class="t dt" style="left:1169.30px;top:219.90px;letter-spacing:-0.013px;">metal</div><div class="t hd" style="left:1158.40px;top:250.35px;letter-spacing:-0.250px;">Set Material</div><div class="t" style="right:327.84px;top:267.90px;letter-spacing:-0.143px;">Geometry</div><div class="t" style="left:1149.00px;top:285.70px;letter-spacing:-0.143px;">Geometry</div><div class="t" style="left:1149.00px;top:301.20px;letter-spacing:-0.254px;">Selection</div><div class="t dt" style="left:1167.10px;top:316.70px;letter-spacing:0.088px;">wire</div><div class="t hd" style="left:1157.30px;top:346.95px;letter-spacing:-0.250px;">Set Material</div><div class="t" style="right:329.04px;top:364.90px;letter-spacing:-0.143px;">Geometry</div><div class="t" style="left:1147.90px;top:382.20px;letter-spacing:-0.143px;">Geometry</div><div class="t" style="left:1147.90px;top:397.60px;letter-spacing:-0.254px;">Selection</div><div class="t dt" style="left:1166.00px;top:413.00px;letter-spacing:-0.120px;">instance</div><div class="t hd" style="left:1323.20px;top:227.00px;letter-spacing:-0.302px;">Join Geometry</div><div class="t" style="right:163.24px;top:244.90px;letter-spacing:-0.143px;">Geometry</div><div class="t" style="left:1313.80px;top:264.70px;letter-spacing:-0.143px;">Geometry</div><div class="t hd" style="left:1465.40px;top:230.15px;letter-spacing:-0.253px;">Group Output</div><div class="t" style="left:1456.00px;top:247.90px;letter-spacing:-0.143px;">Geometry</div><div class="t hd" style="left:827.10px;top:444.90px;letter-spacing:-0.322px;">Instance on Points</div><div class="t" style="right:661.00px;top:462.90px;letter-spacing:-0.300px;">Instances</div><div class="t" style="left:817.70px;top:480.10px;letter-spacing:-0.418px;">Points</div><div class="t" style="left:817.70px;top:495.90px;letter-spacing:-0.254px;">Selection</div><div class="t" style="left:817.70px;top:511.20px;letter-spacing:-0.186px;">Instance</div><div class="t" style="left:828.90px;top:526.90px;letter-spacing:-0.289px;">Pick Instance</div><div class="t" style="left:817.70px;top:542.20px;letter-spacing:-0.311px;">Instance Index</div><div class="t" style="left:817.70px;top:557.90px;letter-spacing:-0.190px;">Rotation:</div><div class="t fs" style="left:827.60px;top:572.20px;">X</div><div class="t fs" style="right:668.50px;top:572.20px;">0°</div><div class="t fs" style="left:827.60px;top:585.50px;">Y</div><div class="t fs" style="right:668.50px;top:585.50px;">0°</div><div class="t fs" style="left:827.60px;top:599.05px;">Z</div><div class="t fs" style="right:668.50px;top:599.05px;">0°</div><div class="t" style="left:817.70px;top:615.90px;letter-spacing:-0.558px;">Scale:</div><div class="t fs" style="left:827.60px;top:630.50px;">X</div><div class="t fs" style="right:668.03px;top:630.50px;letter-spacing:-0.430px;">1.000</div><div class="t fs" style="left:827.60px;top:643.75px;">Y</div><div class="t fs" style="right:668.03px;top:643.75px;letter-spacing:-0.430px;">1.000</div><div class="t fs" style="left:827.60px;top:657.40px;">Z</div><div class="t fs" style="right:668.03px;top:657.40px;letter-spacing:-0.430px;">1.000</div><div class="t hd" style="left:671.10px;top:493.90px;letter-spacing:-0.518px;">Ico Sphere</div><div class="t" style="right:815.22px;top:511.20px;letter-spacing:-0.417px;">Mesh</div><div class="t" style="right:815.36px;top:526.90px;letter-spacing:-0.564px;">UV Map</div><div class="t fs" style="left:671.50px;top:544.90px;letter-spacing:-0.505px;">Radius</div><div class="t fs" style="right:825.05px;top:544.90px;letter-spacing:-0.354px;">0.04 m</div><div class="t fs" style="left:671.50px;top:559.90px;letter-spacing:-0.394px;">Subdivisions</div><div class="t fs" style="right:824.70px;top:559.90px;">3</div></div>
<svg class="layer" viewBox="0 0 1560 801"><circle cx="291.8" cy="162.0" r="3.3" fill="#27b38e" stroke="#161616" stroke-width="0.7"/><path d="M288.4 178.0L291.8 174.6L295.2 178.0L291.8 181.4Z" fill="#4f74b8" stroke="#161616" stroke-width="0.7"/><circle cx="193.0" cy="195.4" r="2.85" fill="#a8a8a8" stroke="#161616" stroke-width="0.7"/><circle cx="193.0" cy="211.2" r="2.85" fill="#a8a8a8" stroke="#161616" stroke-width="0.7"/><circle cx="193.0" cy="226.6" r="2.85" fill="#5f8a60" stroke="#161616" stroke-width="0.7"/><circle cx="193.0" cy="241.8" r="2.85" fill="#5f8a60" stroke="#161616" stroke-width="0.7"/><circle cx="430.1" cy="162.0" r="3.3" fill="#27b38e" stroke="#161616" stroke-width="0.7"/><circle cx="331.7" cy="218.9" r="3.3" fill="#27b38e" stroke="#161616" stroke-width="0.7"/><path d="M328.2 234.0L331.7 230.6L335.1 234.0L331.7 237.4Z" fill="#e6e6e6" stroke="#161616" stroke-width="0.7"/><circle cx="331.7" cy="234.0" r="1.25" fill="#1a1a1a"/><circle cx="331.7" cy="250.0" r="2.85" fill="#5f8a60" stroke="#161616" stroke-width="0.7"/><circle cx="669.8" cy="191.0" r="3.3" fill="#27b38e" stroke="#161616" stroke-width="0.7"/><circle cx="571.0" cy="208.3" r="3.3" fill="#27b38e" stroke="#161616" stroke-width="0.7"/><path d="M567.5 224.0L571.0 220.6L574.5 224.0L571.0 227.4Z" fill="#e6e6e6" stroke="#161616" stroke-width="0.7"/><circle cx="571.0" cy="224.0" r="1.25" fill="#1a1a1a"/><path d="M567.5 239.3L571.0 235.9L574.5 239.3L571.0 242.8Z" fill="#4f74b8" stroke="#161616" stroke-width="0.7"/><path d="M567.5 255.0L571.0 251.6L574.5 255.0L571.0 258.4Z" fill="#4f74b8" stroke="#161616" stroke-width="0.7"/><path d="M547.5 267.0L551.0 263.6L554.5 267.0L551.0 270.4Z" fill="#4f74b8" stroke="#161616" stroke-width="0.7"/><path d="M449.6 284.0L453.0 280.6L456.4 284.0L453.0 287.4Z" fill="#a8a8a8" stroke="#161616" stroke-width="0.7"/><circle cx="453.0" cy="284.0" r="1.25" fill="#1a1a1a"/><path d="M449.6 300.0L453.0 296.6L456.4 300.0L453.0 303.4Z" fill="#a8a8a8" stroke="#161616" stroke-width="0.7"/><circle cx="453.0" cy="300.0" r="1.25" fill="#1a1a1a"/><path d="M449.6 315.3L453.0 311.9L456.4 315.3L453.0 318.8Z" fill="#a8a8a8" stroke="#161616" stroke-width="0.7"/><path d="M424.7 316.0L428.1 312.6L431.6 316.0L428.1 319.4Z" fill="#a8a8a8" stroke="#161616" stroke-width="0.7"/><path d="M325.9 391.6L329.4 388.2L332.8 391.6L329.4 395.1Z" fill="#a8a8a8" stroke="#161616" stroke-width="0.7"/><path d="M325.9 406.9L329.4 403.4L332.8 406.9L329.4 410.3Z" fill="#a8a8a8" stroke="#161616" stroke-width="0.7"/><circle cx="329.4" cy="406.9" r="1.25" fill="#1a1a1a"/><path d="M325.9 422.7L329.4 419.2L332.8 422.7L329.4 426.1Z" fill="#a8a8a8" stroke="#161616" stroke-width="0.7"/><circle cx="329.4" cy="422.7" r="1.25" fill="#1a1a1a"/><path d="M325.9 437.9L329.4 434.4L332.8 437.9L329.4 441.3Z" fill="#a8a8a8" stroke="#161616" stroke-width="0.7"/><circle cx="329.4" cy="437.9" r="1.25" fill="#1a1a1a"/><path d="M325.9 453.8L329.4 450.4L332.8 453.8L329.4 457.2Z" fill="#a8a8a8" stroke="#161616" stroke-width="0.7"/><circle cx="329.4" cy="453.8" r="1.25" fill="#1a1a1a"/><path d="M136.6 342.0L140.0 338.6L143.4 342.0L140.0 345.4Z" fill="#a8a8a8" stroke="#161616" stroke-width="0.7"/><path d="M136.6 358.0L140.0 354.6L143.4 358.0L140.0 361.4Z" fill="#8aa854" stroke="#161616" stroke-width="0.7"/><circle cx="140.0" cy="358.0" r="1.25" fill="#d4e2b0"/><path d="M38.0 396.0L41.5 392.6L45.0 396.0L41.5 399.4Z" fill="#4f74b8" stroke="#161616" stroke-width="0.7"/><path d="M38.0 411.7L41.5 408.2L45.0 411.7L41.5 415.1Z" fill="#a8a8a8" stroke="#161616" stroke-width="0.7"/><circle cx="41.5" cy="411.7" r="1.25" fill="#1a1a1a"/><path d="M38.0 427.6L41.5 424.2L45.0 427.6L41.5 431.1Z" fill="#a8a8a8" stroke="#161616" stroke-width="0.7"/><circle cx="41.5" cy="427.6" r="1.25" fill="#1a1a1a"/><path d="M38.0 443.0L41.5 439.6L45.0 443.0L41.5 446.4Z" fill="#a8a8a8" stroke="#161616" stroke-width="0.7"/><circle cx="41.5" cy="443.0" r="1.25" fill="#1a1a1a"/><path d="M38.0 459.0L41.5 455.6L45.0 459.0L41.5 462.4Z" fill="#a8a8a8" stroke="#161616" stroke-width="0.7"/><circle cx="41.5" cy="459.0" r="1.25" fill="#1a1a1a"/><path d="M38.0 474.2L41.5 470.8L45.0 474.2L41.5 477.6Z" fill="#a8a8a8" stroke="#161616" stroke-width="0.7"/><circle cx="41.5" cy="474.2" r="1.25" fill="#1a1a1a"/><path d="M140.0 540.3L143.4 536.8L146.8 540.3L143.4 543.8Z" fill="#a8a8a8" stroke="#161616" stroke-width="0.7"/><path d="M140.0 556.0L143.4 552.5L146.8 556.0L143.4 559.5Z" fill="#8aa854" stroke="#161616" stroke-width="0.7"/><circle cx="143.4" cy="556.0" r="1.25" fill="#d4e2b0"/><circle cx="44.9" cy="595.0" r="2.85" fill="#4f74b8" stroke="#161616" stroke-width="0.7"/><path d="M41.4 609.8L44.9 606.3L48.4 609.8L44.9 613.2Z" fill="#a8a8a8" stroke="#161616" stroke-width="0.7"/><circle cx="44.9" cy="609.8" r="1.25" fill="#1a1a1a"/><path d="M41.4 626.0L44.9 622.5L48.4 626.0L44.9 629.5Z" fill="#a8a8a8" stroke="#161616" stroke-width="0.7"/><circle cx="44.9" cy="626.0" r="1.25" fill="#1a1a1a"/><path d="M41.4 641.2L44.9 637.8L48.4 641.2L44.9 644.7Z" fill="#a8a8a8" stroke="#161616" stroke-width="0.7"/><circle cx="44.9" cy="641.2" r="1.25" fill="#1a1a1a"/><path d="M41.4 657.0L44.9 653.5L48.4 657.0L44.9 660.5Z" fill="#a8a8a8" stroke="#161616" stroke-width="0.7"/><circle cx="44.9" cy="657.0" r="1.25" fill="#1a1a1a"/><path d="M41.4 672.2L44.9 668.8L48.4 672.2L44.9 675.7Z" fill="#a8a8a8" stroke="#161616" stroke-width="0.7"/><circle cx="44.9" cy="672.2" r="1.25" fill="#1a1a1a"/><path d="M283.1 391.5L286.5 388.1L289.9 391.5L286.5 394.9Z" fill="#8aa854" stroke="#161616" stroke-width="0.7"/><circle cx="286.5" cy="391.5" r="1.25" fill="#d4e2b0"/><path d="M185.1 483.0L188.5 479.6L191.9 483.0L188.5 486.4Z" fill="#a8a8a8" stroke="#161616" stroke-width="0.7"/><circle cx="188.5" cy="483.0" r="1.25" fill="#1a1a1a"/><path d="M185.1 499.0L188.5 495.6L191.9 499.0L188.5 502.4Z" fill="#8aa854" stroke="#161616" stroke-width="0.7"/><circle cx="188.5" cy="499.0" r="1.25" fill="#d4e2b0"/><path d="M185.1 514.3L188.5 510.8L191.9 514.3L188.5 517.8Z" fill="#8aa854" stroke="#161616" stroke-width="0.7"/><circle cx="188.5" cy="514.3" r="1.25" fill="#d4e2b0"/><circle cx="786.7" cy="314.3" r="3.3" fill="#27b38e" stroke="#161616" stroke-width="0.7"/><circle cx="688.1" cy="331.7" r="3.3" fill="#27b38e" stroke="#161616" stroke-width="0.7"/><path d="M684.6 347.3L688.1 343.9L691.6 347.3L688.1 350.8Z" fill="#e6e6e6" stroke="#161616" stroke-width="0.7"/><circle cx="688.1" cy="347.3" r="1.25" fill="#1a1a1a"/><path d="M684.6 362.8L688.1 359.4L691.6 362.8L688.1 366.2Z" fill="#4f74b8" stroke="#161616" stroke-width="0.7"/><path d="M684.6 378.0L688.1 374.6L691.6 378.0L688.1 381.4Z" fill="#4f74b8" stroke="#161616" stroke-width="0.7"/><circle cx="688.1" cy="378.0" r="1.25" fill="#1a1a1a"/><circle cx="913.9" cy="236.4" r="3.3" fill="#27b38e" stroke="#161616" stroke-width="0.7"/><circle cx="815.3" cy="254.0" r="3.3" fill="#27b38e" stroke="#161616" stroke-width="0.7"/><path d="M811.8 270.0L815.3 266.6L818.8 270.0L815.3 273.4Z" fill="#e6e6e6" stroke="#161616" stroke-width="0.7"/><circle cx="815.3" cy="270.0" r="1.25" fill="#1a1a1a"/><circle cx="911.7" cy="325.2" r="3.3" fill="#27b38e" stroke="#161616" stroke-width="0.7"/><circle cx="813.1" cy="365.4" r="2.85" fill="#5f8a60" stroke="#161616" stroke-width="0.7"/><circle cx="813.1" cy="381.0" r="2.85" fill="#a8a8a8" stroke="#161616" stroke-width="0.7"/><circle cx="1103.4" cy="276.0" r="3.3" fill="#27b38e" stroke="#161616" stroke-width="0.7"/><circle cx="1005.1" cy="293.3" r="3.3" fill="#27b38e" stroke="#161616" stroke-width="0.7"/><circle cx="1005.1" cy="309.0" r="3.3" fill="#27b38e" stroke="#161616" stroke-width="0.7"/><circle cx="1005.1" cy="324.9" r="2.9" fill="#e6e6e6" stroke="#161616" stroke-width="0.7"/><circle cx="1005.1" cy="324.9" r="1.0" fill="#8c8c8c"/><circle cx="1102.2" cy="384.0" r="3.3" fill="#27b38e" stroke="#161616" stroke-width="0.7"/><circle cx="1003.8" cy="401.3" r="3.3" fill="#27b38e" stroke="#161616" stroke-width="0.7"/><path d="M1000.3 417.0L1003.8 413.6L1007.2 417.0L1003.8 420.4Z" fill="#e6e6e6" stroke="#161616" stroke-width="0.7"/><circle cx="1003.8" cy="417.0" r="1.25" fill="#1a1a1a"/><path d="M1000.3 432.3L1003.8 428.9L1007.2 432.3L1003.8 435.8Z" fill="#e6e6e6" stroke="#161616" stroke-width="0.7"/><circle cx="1003.8" cy="432.3" r="1.25" fill="#1a1a1a"/><circle cx="1241.6" cy="176.3" r="3.3" fill="#27b38e" stroke="#161616" stroke-width="0.7"/><circle cx="1143.2" cy="194.0" r="3.3" fill="#27b38e" stroke="#161616" stroke-width="0.7"/><path d="M1139.8 210.0L1143.2 206.6L1146.7 210.0L1143.2 213.4Z" fill="#e6e6e6" stroke="#161616" stroke-width="0.7"/><circle cx="1143.2" cy="210.0" r="1.25" fill="#1a1a1a"/><circle cx="1143.2" cy="225.2" r="2.85" fill="#a29e9c" stroke="#161616" stroke-width="0.7"/><circle cx="1239.6" cy="273.0" r="3.3" fill="#27b38e" stroke="#161616" stroke-width="0.7"/><circle cx="1141.0" cy="290.8" r="3.3" fill="#27b38e" stroke="#161616" stroke-width="0.7"/><path d="M1137.5 306.3L1141.0 302.9L1144.5 306.3L1141.0 309.8Z" fill="#e6e6e6" stroke="#161616" stroke-width="0.7"/><circle cx="1141.0" cy="306.3" r="1.25" fill="#1a1a1a"/><circle cx="1141.0" cy="322.0" r="2.85" fill="#a29e9c" stroke="#161616" stroke-width="0.7"/><circle cx="1238.4" cy="370.0" r="3.3" fill="#27b38e" stroke="#161616" stroke-width="0.7"/><circle cx="1139.9" cy="387.3" r="3.3" fill="#27b38e" stroke="#161616" stroke-width="0.7"/><path d="M1136.5 402.7L1139.9 399.2L1143.4 402.7L1139.9 406.1Z" fill="#e6e6e6" stroke="#161616" stroke-width="0.7"/><circle cx="1139.9" cy="402.7" r="1.25" fill="#1a1a1a"/><circle cx="1139.9" cy="418.3" r="2.85" fill="#a29e9c" stroke="#161616" stroke-width="0.7"/><circle cx="1404.2" cy="250.0" r="3.3" fill="#27b38e" stroke="#161616" stroke-width="0.7"/><rect x="1303.2" y="262.3" width="5.2" height="15" rx="2.4" fill="#27b38e" stroke="#161616" stroke-width="0.7"/><circle cx="1448.0" cy="253.0" r="3.3" fill="#27b38e" stroke="#161616" stroke-width="0.7"/><circle cx="1448.0" cy="268.4" r="2.9" fill="#262626" stroke="#7d7d7d" stroke-width="1.1"/><circle cx="908.3" cy="468.0" r="3.3" fill="#27b38e" stroke="#161616" stroke-width="0.7"/><circle cx="809.7" cy="485.2" r="3.3" fill="#27b38e" stroke="#161616" stroke-width="0.7"/><path d="M806.2 501.0L809.7 497.6L813.2 501.0L809.7 504.4Z" fill="#e6e6e6" stroke="#161616" stroke-width="0.7"/><circle cx="809.7" cy="501.0" r="1.25" fill="#1a1a1a"/><circle cx="809.7" cy="516.3" r="3.3" fill="#27b38e" stroke="#161616" stroke-width="0.7"/><path d="M806.2 532.0L809.7 528.5L813.2 532.0L809.7 535.5Z" fill="#e6e6e6" stroke="#161616" stroke-width="0.7"/><circle cx="809.7" cy="532.0" r="1.25" fill="#1a1a1a"/><path d="M806.2 547.3L809.7 543.8L813.2 547.3L809.7 550.8Z" fill="#5f7d70" stroke="#161616" stroke-width="0.7"/><path d="M806.2 563.0L809.7 559.5L813.2 563.0L809.7 566.5Z" fill="#4f74b8" stroke="#161616" stroke-width="0.7"/><circle cx="809.7" cy="563.0" r="1.25" fill="#1a1a1a"/><path d="M806.2 621.0L809.7 617.5L813.2 621.0L809.7 624.5Z" fill="#4f74b8" stroke="#161616" stroke-width="0.7"/><circle cx="809.7" cy="621.0" r="1.25" fill="#1a1a1a"/><circle cx="752.1" cy="516.3" r="3.3" fill="#27b38e" stroke="#161616" stroke-width="0.7"/><path d="M748.6 532.0L752.1 528.5L755.6 532.0L752.1 535.5Z" fill="#4f74b8" stroke="#161616" stroke-width="0.7"/><circle cx="653.7" cy="550.0" r="2.85" fill="#a8a8a8" stroke="#161616" stroke-width="0.7"/><circle cx="653.7" cy="565.0" r="2.85" fill="#5f8a60" stroke="#161616" stroke-width="0.7"/></svg>
<div id="lb"></div>
<div id="hx"><div id="hdr"></div>
<div style="position:absolute;left:0;top:0;width:2px;height:24px;background:linear-gradient(90deg,#303030 0,#2e2e2e 1px,rgba(46,46,46,0) 2px)"></div>
<!-- editor type button -->
<div style="position:absolute;left:8.2px;top:2.2px;width:31.6px;height:19.6px;background:#282828;border:0.7px solid #3b3b3b;border-radius:3px"></div>
<svg class="layer" viewBox="0 0 1560 801">
 <!-- editor icon -->
 <g fill="#9a9a9a">
  <rect x="12.9" y="5" width="2.9" height="2.9"/>
  <rect x="17.5" y="5.9" width="2.9" height="2.9"/>
 </g>
 <circle cx="16.5" cy="12.5" r="1.7" fill="#555" stroke="#c4c4c4" stroke-width="1.3"/>
 <circle cx="23.3" cy="15.4" r="3.9" fill="#d9d9d9"/>
 <path d="M30.6 11.6L33.6 14.6L36.6 11.6" fill="none" stroke="#d6d6d6" stroke-width="1.2"/>
 <!-- breadcrumb -->
 <g fill="none" stroke="#c4c4c4" stroke-width="1.15">
  <path d="M0.3 42.2L4.8 45.8L0.3 49.4"/>
  <path d="M86.2 42.2L90.6 45.8L86.2 49.4"/>
  <path d="M222.6 42.2L227 45.8L222.6 49.4"/>
 </g>
 <!-- object icon -->
 <g fill="none" stroke="#d0d0d0" stroke-width="1">
  <path d="M19.5 42.6V39.6H22.6M29.6 39.6H32.7V42.6M32.7 49.6V52.6H29.6M22.6 52.6H19.5V49.6"/>
 </g>
 <rect x="21.9" y="42.1" width="8.3" height="8.1" rx="0.6" fill="#d9d9d9"/>
 <!-- modifier icon -->
 <g fill="#9a9a9a">
  <rect x="101.3" y="39.2" width="2.9" height="2.9"/>
  <rect x="105.8" y="40.2" width="2.9" height="2.9"/>
 </g>
 <circle cx="104.6" cy="46.3" r="1.7" fill="#555" stroke="#c4c4c4" stroke-width="1.3"/>
 <circle cx="111.3" cy="49.2" r="3.9" fill="#d9d9d9"/>
 <!-- nodetree icon (breadcrumb) -->
 <rect x="238.6" y="39.6" width="8.4" height="5" rx="1.2" fill="#d9d9d9"/>
 <rect x="237.2" y="47.4" width="9.8" height="5.4" rx="1.2" fill="#d9d9d9"/>
 <rect x="239.4" y="41.6" width="6.8" height="0.9" fill="#555"/>
 <rect x="238" y="49.6" width="8.2" height="0.9" fill="#555"/>
 <path d="M247.6 40.6H249.6V50.2H247.6" fill="none" stroke="#bdbdbd" stroke-width="0.9"/>
 <path d="M247 48.6L248.8 50.2L247 51.8Z" fill="#d0d0d0"/>
</svg>
<div class="ht" style="left:52.1px;top:5px;letter-spacing:0.1px">View</div>
<div class="ht" style="left:91.8px;top:5px;letter-spacing:0.05px">Select</div>
<div class="ht" style="left:137.8px;top:5px">Add</div>
<div class="ht" style="left:172.2px;top:5px">Node</div>
<div class="ht" style="left:42.4px;top:39px;letter-spacing:-0.32px">Plane</div>
<div class="ht" style="left:124.2px;top:39px;letter-spacing:0.05px">GeometryNodes</div>
<div class="ht" style="left:260.2px;top:39px;letter-spacing:0.05px">Geometry Nodes</div>
<div class="ht" style="left:251.2px;top:43.6px;font-size:9px">2</div>

<!-- centre ID widget -->
<div style="position:absolute;left:654.4px;top:2.6px;width:30.4px;height:19px;background:#282828;border:0.7px solid #3b3b3b;border-radius:3px 0 0 3px"></div>
<div style="position:absolute;left:684.8px;top:2.6px;width:120px;height:19px;background:#1b1b1b;border:0.7px solid #3b3b3b;border-left:none"></div>
<svg class="layer" viewBox="0 0 1560 801">
 <rect x="804.8" y="2.6" width="23.5" height="19" fill="#555"/>
 <rect x="829" y="2.6" width="19.8" height="19" fill="#555"/>
 <rect x="849.5" y="2.6" width="18.9" height="19" fill="#555"/>
 <path d="M869.1 2.6H885.2Q888.2 2.6 888.2 5.6V18.6Q888.2 21.6 885.2 21.6H869.1Z" fill="#555"/>
</svg>
<div class="ht" style="left:692.2px;top:5px;letter-spacing:0.05px">Geometry Nodes</div>
<div class="ht" style="left:813px;top:5px">2</div>
<svg class="layer" viewBox="0 0 1560 801">
 <!-- center id icon -->
 <rect x="658.2" y="5.6" width="9.2" height="5.6" rx="1.2" fill="#d9d9d9"/>
 <rect x="658.2" y="13.2" width="9.8" height="5.6" rx="1.2" fill="#d9d9d9"/>
 <rect x="659" y="7.9" width="7.6" height="0.9" fill="#555"/>
 <rect x="659" y="15.5" width="8.2" height="0.9" fill="#555"/>
 <path d="M668.4 6.6H671V16H669.4" fill="none" stroke="#bdbdbd" stroke-width="0.9"/>
 <path d="M668.4 14.4L670.2 16L668.4 17.6Z" fill="#d0d0d0"/>
 <path d="M676.2 10.8L679 13.6L681.8 10.8" fill="none" stroke="#d6d6d6" stroke-width="1.2"/>
 <!-- shield -->
 <path d="M838.8 5.6C836.8 6.8 834.6 7.2 832.6 7.2C832.4 12.6 834.6 16.6 838.8 18.6C843 16.6 845.2 12.6 845 7.2C843 7.2 840.8 6.8 838.8 5.6Z" fill="none" stroke="#8f9694" stroke-width="1.1"/>
 <!-- copy -->
 <path d="M856.6 8.4H852.8V18.2H861.4V15.6" fill="none" stroke="#d6d6d6" stroke-width="1.15"/>
 <path d="M856.8 5.6H862.4L865.8 9V15.4H856.8Z" fill="none" stroke="#d6d6d6" stroke-width="1.15"/>
 <path d="M862.2 5.8V9.2H865.6Z" fill="#d6d6d6"/>
 <!-- X -->
 <path d="M875.2 8.4L883.2 16.4M883.2 8.4L875.2 16.4" fill="none" stroke="#e0e0e0" stroke-width="1.2"/>
 <!-- pin -->
 <g fill="none" stroke="#b4b4b4" stroke-width="1.3">
  <path d="M897 18.4L901.6 13.8"/>
  <path d="M899.2 10.2L905.2 16.2L906.2 13.6L909.4 10.6L910.2 9.4L906.4 5.6L905 6.4L902 9.4Z"/>
 </g>
</svg>

<!-- right buttons -->
<div style="position:absolute;left:1460.4px;top:2.6px;width:19.4px;height:19px;background:#373737;border-radius:3px"></div>
<div style="position:absolute;left:1485.8px;top:2.6px;width:18.2px;height:19px;background:#555555;border-radius:3px 0 0 3px"></div>
<div style="position:absolute;left:1504px;top:2.6px;width:32.6px;height:19px;background:#282828;border:0.7px solid #3b3b3b;border-left:none;border-radius:0 3px 3px 0"></div>
<div style="position:absolute;left:1543px;top:2.6px;width:20px;height:19px;background:#4772b3;border-radius:3px 0 0 3px"></div>
<svg class="layer" viewBox="0 0 1560 801">
 <!-- parent arrow -->
 <path d="M1468.6 5.6V18.4H1477M1464.6 10L1468.6 5.6L1472.6 10" fill="none" stroke="#69736f" stroke-width="1.1"/>
 <!-- magnet -->
 <path d="M1489.4 10.8L1493.6 6.6A4.2 4.2 0 0 1 1499.8 12.6L1495.8 17.8L1493.6 16L1497.4 11A1.5 1.5 0 0 0 1495.4 8.8L1491.4 12.8Z" fill="none" stroke="#adaeac" stroke-width="1.35" stroke-linejoin="round"/>
 <!-- snap grid icon -->
 <rect x="1509.8" y="6.2" width="5.2" height="5" fill="#dcdcdc"/>
 <path d="M1519.4 5V18.8M1512.6 12.6V18.8M1508.8 15.6H1523M1516.8 8.4H1523" fill="none" stroke="#dcdcdc" stroke-width="1.1"/>
 <path d="M1526.8 11.2L1530.2 14.4L1533.6 11.2" fill="none" stroke="#dcdcdc" stroke-width="1.3"/>
 <!-- overlay icon -->
 <circle cx="1554.6" cy="10" r="4.9" fill="#dcdcdc"/>
 <path d="M1548.6 9.6A4.7 4.7 0 1 0 1554.4 16.8" fill="none" stroke="#dcdcdc" stroke-width="1.4"/>
 <path d="M1550.6 8.6L1554.2 11" fill="none" stroke="#333" stroke-width="0.8" stroke-dasharray="1.2 0.8"/>
</svg>
</div>
</body></html>
